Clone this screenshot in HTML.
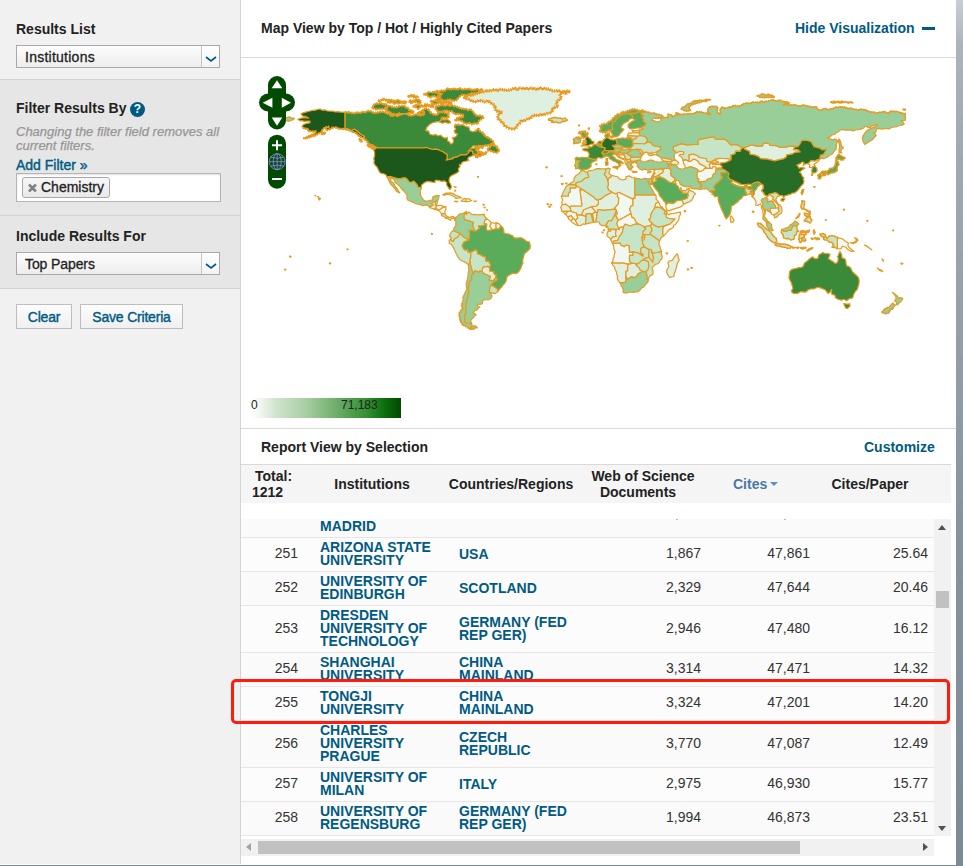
<!DOCTYPE html>
<html lang="en">
<head>
<meta charset="utf-8">
<title>Essential Science Indicators</title>
<style>
*{box-sizing:border-box;margin:0;padding:0}
html,body{width:963px;height:866px;overflow:hidden;background:#fff}
body{position:relative;font-family:"Liberation Sans",Arial,sans-serif;font-size:14px;color:#222}
.abs{position:absolute}
#side{left:0;top:0;width:240px;height:866px;background:#f1f1f1}
#vline{left:240px;top:0;width:1px;height:866px;background:#d4d4d4}
.sec{left:0;width:240px;background:#e6e6e6;border-top:1px solid #d2d2d2;border-bottom:1px solid #d2d2d2}
.h{font-weight:bold;font-size:14px;color:#222;white-space:nowrap;line-height:16px}
.sel{left:16px;width:204px;height:23px;border:1px solid #a9a9a9;background:linear-gradient(#fdfdfd,#ededed);font-size:14px;line-height:23px;padding-left:8px;color:#222;-webkit-text-stroke:0.3px #222}
.sel .arr{position:absolute;right:0;top:0;width:18px;height:21px;border-left:1px solid #c4c4c4;background:linear-gradient(#fff,#f3f3f3)}
.sel .arr svg{position:absolute;left:3px;top:10px}
.blue{color:#005a84}
.btn{top:304px;height:25px;border:1px solid #bdbdbd;background:linear-gradient(#fcfcfc,#f0f0f0);font-size:14px;line-height:25px;text-align:center;color:#005a84;letter-spacing:-0.2px;-webkit-text-stroke:0.4px #005a84}
#rstrip{left:956px;top:0;width:7px;height:866px;background:linear-gradient(#c9ced3 0%,#adb4bb 5%,#a3abb3 14%,#939ea7 40%,#8794a0 60%,#7a8b96 100%)}
#bstrip{left:0;top:865px;width:963px;height:1px;background:#7a8b96}
.hl{left:241px;height:1px;background:#d9d9d9}
.th{font-weight:bold;font-size:14px;line-height:16px;color:#222;text-align:center;white-space:nowrap}
.row{left:241px;width:692px;border-top:1px solid #e6e6e6}
.row.odd{background:#fafafa}
.row.even{background:#fcfcfc}
.n{position:absolute;left:0;width:57px;text-align:right;font-size:14px;color:#333;line-height:16px}
.inst,.ctry{position:absolute;font-weight:bold;font-size:14px;line-height:13px;color:#005a84;white-space:nowrap;letter-spacing:0}
.inst{left:79px}
.ctry{left:218px}
.num{position:absolute;text-align:right;font-size:14px;color:#333;line-height:16px;width:80px}
.c1{left:380px}.c2{left:489px}.c3{left:607px}
</style>
</head>
<body>
<!-- SIDEBAR -->
<div id="side" class="abs"></div>
<div id="vline" class="abs"></div>
<div class="abs h" style="left:16px;top:21px">Results List</div>
<div class="abs sel" style="top:45px;letter-spacing:0.25px">Institutions<span class="arr"><svg width="12" height="7" viewBox="0 0 12 7"><path d="M1 1 L6 5 L11 1" fill="none" stroke="#005a84" stroke-width="1.7"/></svg></span></div>

<div class="abs sec" style="top:79px;height:137px"></div>
<div class="abs h" style="left:16px;top:100px">Filter Results By</div>
<div class="abs" style="left:130px;top:102px;width:15px;height:15px;border-radius:50%;background:#005a84;color:#fff;font-weight:bold;font-size:12px;line-height:15px;text-align:center">?</div>
<div class="abs" style="left:16px;top:125px;font-style:italic;font-size:13px;line-height:14px;color:#969696;-webkit-text-stroke:0.25px #969696;white-space:nowrap">Changing the filter field removes all<br>current filters.</div>
<div class="abs blue" style="left:16px;top:157px;font-size:14px;line-height:16px;white-space:nowrap;-webkit-text-stroke:0.4px #005a84">Add Filter »</div>
<div class="abs" style="left:16px;top:173px;width:205px;height:29px;background:#fff;border:1px solid #b5b5b5;box-shadow:inset 0 1px 2px rgba(0,0,0,.12)"></div>
<div class="abs" style="left:22px;top:177px;width:88px;height:21px;border:1px solid #a8a8a8;border-radius:3px;background:linear-gradient(#f7f7f7,#e9e9e9);font-size:14px;line-height:19px;color:#222;white-space:nowrap"><span style="position:absolute;left:5px;top:0;color:#808080;font-weight:bold;font-size:15px;-webkit-text-stroke:0.8px #808080">×</span><span style="position:absolute;left:18px;top:0;-webkit-text-stroke:0.3px #222">Chemistry</span></div>

<div class="abs sec" style="top:215px;height:74px;border-top:1px solid #d2d2d2"></div>
<div class="abs h" style="left:16px;top:228px">Include Results For</div>
<div class="abs sel" style="top:252px;letter-spacing:-0.1px">Top Papers<span class="arr"><svg width="12" height="7" viewBox="0 0 12 7"><path d="M1 1 L6 5 L11 1" fill="none" stroke="#005a84" stroke-width="1.7"/></svg></span></div>

<div class="abs btn" style="left:16px;width:56px">Clear</div>
<div class="abs btn" style="left:80px;width:103px">Save Criteria</div>

<!-- MAIN HEADER -->
<div class="abs h" style="left:261px;top:20px;word-spacing:0px">Map View by Top / Hot / Highly Cited Papers</div>
<div class="abs h blue" style="left:795px;top:20px">Hide Visualization</div>
<div class="abs" style="left:922px;top:27px;width:13px;height:3px;background:#005a84"></div>
<div class="abs hl" style="top:57px;width:715px"></div>

<!-- MAP -->
<svg class="abs" id="map" style="left:241px;top:58px" width="715" height="370" viewBox="241 58 715 370">
<!--MAPSTART-->
<g stroke="#e89a1e" stroke-width="1.2" stroke-linejoin="round">
<path fill="#f1f8f1" d="M435.4,201.9 437.5,200.8 437.1,203.6 435.9,205.3 435.4,205.3Z"/>
<path fill="#f1f8f1" d="M435.2,207.9 436.9,205.7 438.9,205.5 440.9,205.3 443.3,206.4 445.8,206.9 443.0,207.2 440.9,209.0 438.3,210.4 437.8,209.7Z"/>
<path fill="#f1f8f1" d="M433.8,209.0 435.2,207.9 437.8,209.7 437.8,210.0 435.8,209.6Z"/>
<path fill="#f1f8f1" d="M438.3,210.4 440.9,209.0 443.0,207.2 445.8,206.9 445.9,209.2 445.0,211.2 445.0,213.8 441.5,213.7 440.1,211.9Z"/>
<path fill="#f1f8f1" d="M461.2,201.2 464.0,198.4 465.9,198.8 465.9,201.7 464.5,201.4Z"/>
<path fill="#f1f8f1" d="M465.9,198.8 468.9,198.8 471.7,200.7 468.9,201.4 465.9,201.7Z"/>
<path fill="#f1f8f1" d="M454.4,201.2 457.9,201.5 456.7,202.0Z"/>
<path fill="#f1f8f1" d="M454.0,186.6 456.3,187.0 455.3,187.5ZM454.9,189.9 455.8,190.9 454.9,191.3Z"/>
<path fill="#f1f8f1" d="M483.2,214.4 484.6,214.4 484.2,215.4Z"/>
<path fill="#f1f8f1" d="M486.3,218.2 489.0,220.4 491.2,222.5 491.1,223.7 489.8,226.0 491.6,228.6 492.5,229.6 489.0,230.6 486.7,230.5 486.3,227.7 486.7,224.2 485.1,223.9 484.1,223.4 484.6,220.8Z"/>
<path fill="#f1f8f1" d="M491.2,222.5 494.0,223.1 496.8,222.8 495.9,225.1 496.3,228.7 493.3,229.6 492.5,229.6 491.6,228.6 489.8,226.0 491.1,223.7Z"/>
<path fill="#f1f8f1" d="M496.8,222.8 498.8,223.6 500.3,225.1 500.8,225.8 499.1,228.9 496.3,228.7 495.9,225.1Z"/>
<path fill="#f1f8f1" d="M431.3,233.4 432.6,233.8 431.9,234.6Z"/>
<path fill="#f1f8f1" d="M619.0,154.5 624.3,154.9 625.1,156.6 624.6,157.5 623.4,159.1 621.7,158.4 619.0,156.6Z"/>
<path fill="#f1f8f1" d="M623.4,159.1 624.6,157.5 626.2,159.1 625.0,160.3Z"/>
<path fill="#f1f8f1" d="M625.0,160.3 626.2,159.1 626.9,161.0 627.8,162.2 626.0,164.1 625.0,162.7Z"/>
<path fill="#f1f8f1" d="M626.9,161.0 626.9,159.2 628.6,159.7 630.2,159.6 631.3,161.3 627.8,162.2Z"/>
<path fill="#f1f8f1" d="M637.5,149.3 640.3,149.3 643.5,152.3 640.3,154.0 640.3,152.1Z"/>
<path fill="#f1f8f1" d="M682.8,160.4 685.4,159.6 688.9,161.3 690.6,161.3 693.2,159.1 695.9,159.7 698.5,161.5 699.4,163.6 704.6,166.2 707.2,168.1 704.6,168.4 703.7,170.0 700.2,171.7 698.0,171.2 697.6,169.5 694.1,167.9 690.6,166.7 686.8,167.9 685.2,168.2 685.0,165.3 683.6,163.6 683.3,161.5Z"/>
<path fill="#f1f8f1" d="M714.2,160.1 715.1,159.2 719.4,158.4 722.9,158.5 729.0,158.7 731.1,159.7 727.3,161.8 724.7,162.7 720.3,163.2 719.8,164.4 715.9,164.4 712.4,164.3 712.1,163.0 715.1,163.2 718.6,162.3 716.3,161.0 714.2,161.0 715.1,159.6Z"/>
<path fill="#f1f8f1" d="M709.5,168.4 709.8,166.2 709.0,164.8 710.9,163.2 712.1,162.2 712.1,163.0 712.4,164.3 715.9,164.4 719.8,164.4 722.0,166.2 721.7,168.2 718.6,168.1 715.9,169.1 715.9,167.0 713.3,166.5 712.1,168.4Z"/>
<path fill="#f1f8f1" d="M665.8,204.5 666.5,204.3 667.9,202.7 673.2,203.4 676.7,200.7 681.9,200.0 683.8,204.1 681.9,205.9 679.5,207.4 676.7,208.1 674.3,208.9 671.9,209.6 669.7,210.7 667.1,210.9 666.2,207.8Z"/>
<path fill="#f1f8f1" d="M698.0,171.2 700.2,171.7 703.7,170.0 704.6,168.4 707.2,168.1 709.5,168.4 712.1,168.4 713.3,166.5 715.9,167.0 715.9,169.1 718.6,168.1 721.7,168.2 721.2,168.8 715.9,170.1 715.4,173.1 713.3,174.3 712.4,177.4 712.1,177.8 707.2,179.3 706.7,181.2 700.2,181.9 697.4,181.2 699.0,179.2 697.3,178.3 696.7,174.0Z"/>
<path fill="#f1f8f1" d="M746.3,185.6 747.9,184.0 751.0,184.5 751.9,186.3 747.9,186.6Z"/>
<path fill="#f1f8f1" d="M752.3,197.0 752.8,196.0 754.0,194.4 754.2,191.3 756.3,189.2 757.3,186.8 759.1,185.6 761.0,183.8 763.1,185.1 763.4,188.2 761.5,190.8 763.8,192.7 764.3,194.6 766.0,195.6 767.8,196.1 765.9,197.7 762.6,198.8 761.3,200.8 763.4,204.6 762.6,206.7 764.1,209.5 765.0,212.4 763.4,215.6 762.9,212.1 762.6,210.0 761.5,208.2 761.5,206.0 760.5,203.8 757.8,205.5 755.7,205.2 756.1,201.7 754.4,198.6Z"/>
<path fill="#f1f8f1" d="M765.9,197.7 767.8,196.1 769.2,194.1 770.9,195.6 773.7,197.2 772.5,199.1 774.8,200.8 777.4,203.8 778.8,206.6 778.8,207.8 776.2,208.1 775.3,207.9 775.5,205.7 774.1,204.3 772.7,201.2 769.4,201.4 767.4,202.2 767.8,199.1Z"/>
<path fill="#f1f8f1" d="M769.9,209.5 770.9,208.1 775.3,207.9 776.2,208.1 778.8,207.8 778.8,211.6 776.2,213.8 773.6,214.9 771.8,214.5 770.8,212.6Z"/>
<path fill="#f1f8f1" d="M837.3,237.4 839.3,238.1 841.5,238.4 843.4,239.5 845.7,241.6 848.6,243.3 847.8,244.7 848.6,246.9 850.4,248.5 852.0,250.0 853.9,251.1 851.6,251.5 849.5,250.6 847.5,249.3 846.0,247.3 842.5,246.2 840.8,248.8 837.3,248.7ZM850.4,242.6 853.9,242.4 856.8,240.2 856.5,242.1 853.9,243.6ZM854.4,237.6 857.4,239.0 857.9,240.7 856.1,239.2Z"/>
<path fill="#f1f8f1" d="M808.1,163.7 811.1,160.4 814.9,161.0 817.6,159.4 819.3,159.6 817.6,161.8 815.7,163.3 813.7,164.4 815.1,166.0 812.3,167.4 809.4,167.5 809.9,164.8Z"/>
<path fill="#f1f8f1" d="M617.3,193.0 619.0,192.2 633.0,199.1 633.0,205.7 631.3,205.7 629.5,209.5 630.4,210.9 631.3,214.7 629.5,214.2 624.3,217.3 619.9,219.6 618.2,219.9 615.5,215.6 617.3,213.8 616.4,210.4 614.7,207.8 618.2,203.8 618.7,198.2 617.3,196.5Z"/>
<path fill="#e0f0e0" d="M598.4,199.6 601.6,198.6 605.1,195.6 612.1,192.2 615.5,193.7 617.3,193.0 617.3,196.5 618.7,198.2 618.2,203.8 614.7,207.8 614.7,209.2 608.6,209.8 603.3,210.4 598.1,209.5 597.4,212.6 595.3,212.1 594.8,210.9 591.4,206.9 596.3,206.0 598.4,203.8Z"/>
<path fill="#e0f0e0" d="M582.7,189.6 593.2,196.8 596.7,200.0 598.4,199.6 598.4,203.8 596.3,206.0 591.4,206.9 587.6,208.3 583.6,210.0 581.5,214.9 577.1,215.2 576.3,213.0 572.4,212.1 571.2,211.4 569.8,207.4 571.0,205.9 581.5,206.0 581.8,204.6 579.8,189.6Z"/>
<path fill="#f1f8f1" d="M561.4,196.0 568.4,196.0 568.4,193.0 570.1,192.2 570.1,187.8 575.9,187.8 575.9,185.6 582.7,189.6 579.8,189.6 581.8,204.6 581.5,206.0 571.0,205.9 569.8,207.4 565.8,204.1 562.3,205.0 561.8,202.4 562.6,200.0 561.9,198.0Z"/>
<path fill="#f1f8f1" d="M561.9,211.4 567.2,211.2 567.2,212.8 564.9,213.8Z"/>
<path fill="#f1f8f1" d="M564.9,213.8 567.2,212.8 567.2,211.2 571.2,211.4 572.4,212.1 576.3,213.0 577.1,215.2 577.7,218.3 575.4,220.2 573.1,218.3 571.0,215.6 567.9,217.1 566.6,215.3Z"/>
<path fill="#f1f8f1" d="M567.9,217.1 571.0,215.6 573.1,218.3 571.0,220.9 569.1,219.4Z"/>
<path fill="#f1f8f1" d="M571.0,220.9 573.1,218.3 575.4,220.2 578.0,225.3 575.9,224.8 574.2,223.7 572.4,222.6Z"/>
<path fill="#f1f8f1" d="M618.2,219.9 619.9,219.6 624.3,217.3 629.5,214.2 631.3,214.7 632.1,217.3 633.9,217.8 636.5,222.5 639.1,224.2 634.8,224.2 630.4,226.0 625.1,224.2 623.6,226.8 619.9,227.7 619.0,229.4 616.6,223.4Z"/>
<path fill="#f1f8f1" d="M608.2,228.9 610.8,229.1 610.8,231.2 608.2,231.2Z"/>
<path fill="#f1f8f1" d="M641.7,237.8 644.9,237.1 644.2,239.8 642.4,240.5Z"/>
<path fill="#f1f8f1" d="M654.5,208.1 654.8,206.9 655.7,203.4 658.5,201.7 659.6,203.7 660.1,206.0 662.3,207.1 663.6,209.2 666.4,210.9 665.1,211.2 660.9,207.8 657.3,207.1Z"/>
<path fill="#f1f8f1" d="M665.1,211.2 666.4,210.9 666.7,213.0 666.2,214.0 664.1,213.8Z"/>
<path fill="#f1f8f1" d="M666.7,213.0 668.8,214.9 670.8,213.6 673.2,213.5 675.6,213.2 678.0,212.5 680.5,212.1 680.3,214.7 679.2,216.5 679.0,218.8 678.2,220.9 676.7,222.5 675.7,224.3 673.7,225.3 673.2,227.5 671.4,228.6 668.9,229.9 667.1,232.0 665.5,234.0 663.7,235.8 662.7,234.5 662.7,228.0 664.3,226.1 666.2,225.1 669.7,224.2 674.9,219.0 669.7,218.7 666.2,217.3 666.2,214.7 666.2,214.0Z"/>
<path fill="#f1f8f1" d="M612.4,243.1 613.8,243.1 620.1,243.1 620.8,245.0 624.3,246.6 626.0,245.0 629.2,245.6 629.5,252.3 633.0,251.8 633.0,255.4 629.5,255.4 629.5,261.0 632.0,263.4 627.8,264.1 623.4,263.1 615.5,263.1 611.7,262.9 613.0,261.1 612.9,258.9 614.2,256.8 614.3,254.2 615.2,252.0 613.8,248.5 613.6,245.9 612.6,243.5Z"/>
<path fill="#f1f8f1" d="M638.2,284.2 640.9,282.7 642.4,284.0 640.5,285.9Z"/>
<path fill="#f1f8f1" d="M645.2,278.0 647.1,279.4 646.8,280.2 645.2,279.7Z"/>
<path fill="#f1f8f1" d="M877.4,267.9 879.4,269.4 881.8,270.2 882.7,271.6 879.2,270.2Z"/>
<path fill="#f1f8f1" d="M900.7,263.2 902.9,263.4 901.9,264.4Z"/>
<path fill="#f1f8f1" d="M864.3,245.0 867.0,246.4 870.5,249.0 871.9,249.9 868.7,247.6 866.8,245.9Z"/>
<path fill="#f1f8f1" d="M882.0,258.9 883.0,259.8 883.6,261.5 882.7,260.3Z"/>
<path fill="#f1f8f1" d="M289.4,256.1 291.1,256.3 290.5,257.3 289.7,257.0Z"/>
<path fill="#f1f8f1" d="M329.3,262.9 330.9,263.1 330.3,264.0 329.6,263.7Z"/>
<path fill="#f1f8f1" d="M548.7,206.2 550.4,206.4 549.8,207.3 549.0,207.1Z"/>
<path fill="#f1f8f1" d="M547.0,203.7 548.6,203.8 548.0,204.7 547.3,204.4Z"/>
<path fill="#f1f8f1" d="M550.4,204.4 551.8,204.5 551.3,205.3 550.7,205.1Z"/>
<path fill="#f1f8f1" d="M561.4,183.5 563.2,183.7 562.6,184.6 561.8,184.4Z"/>
<path fill="#f1f8f1" d="M565.5,183.0 567.1,183.2 566.5,184.0 565.8,183.8Z"/>
<path fill="#f1f8f1" d="M690.9,267.4 692.5,267.6 691.9,268.5 691.2,268.2Z"/>
<path fill="#f1f8f1" d="M687.2,269.0 688.8,269.2 688.2,270.0 687.5,269.8Z"/>
<path fill="#f1f8f1" d="M666.1,252.9 667.7,253.0 667.1,253.9 666.4,253.7Z"/>
<path fill="#f1f8f1" d="M687.1,240.6 688.5,240.8 688.0,241.5 687.4,241.3Z"/>
<path fill="#f1f8f1" d="M601.9,232.0 603.3,232.1 602.8,232.9 602.2,232.7Z"/>
<path fill="#f1f8f1" d="M603.4,229.8 604.6,229.9 604.2,230.6 603.7,230.4Z"/>
<path fill="#f1f8f1" d="M605.6,226.4 607.0,226.6 606.5,227.3 605.9,227.1Z"/>
<path fill="#f1f8f1" d="M843.2,209.3 844.6,209.4 844.1,210.2 843.5,209.9Z"/>
<path fill="#f1f8f1" d="M825.3,219.7 826.5,219.8 826.1,220.5 825.6,220.3Z"/>
<path fill="#f1f8f1" d="M866.7,220.6 867.9,220.7 867.5,221.4 867.0,221.2Z"/>
<path fill="#f1f8f1" d="M284.5,269.2 285.9,269.4 285.4,270.1 284.8,269.9Z"/>
<path fill="#f1f8f1" d="M892.5,230.1 893.8,230.2 893.3,230.9 892.8,230.7Z"/>
<path fill="#f1f8f1" d="M346.9,249.0 348.1,249.1 347.7,249.8 347.2,249.6Z"/>
<path fill="#f1f8f1" d="M545.8,166.9 547.4,167.1 546.8,167.9 546.1,167.7Z"/>
<path fill="#f1f8f1" d="M560.9,175.8 562.3,175.9 561.8,176.7 561.2,176.5Z"/>
<path fill="#f1f8f1" d="M684.2,210.7 685.9,210.9 685.3,211.8 684.5,211.6Z"/>
<path fill="#f1f8f1" d="M718.8,225.3 720.0,225.4 719.6,226.0 719.1,225.9Z"/>
<path fill="#f1f8f1" d="M752.3,211.2 754.0,211.4 753.4,212.4 752.6,212.1Z"/>
<path fill="#f1f8f1" d="M477.4,176.6 478.5,176.7 478.1,177.3 477.6,177.1Z"/>
<path fill="#f1f8f1" d="M483.0,204.4 484.4,204.5 483.9,205.3 483.3,205.1Z"/>
<path fill="#f1f8f1" d="M484.0,207.2 485.2,207.3 484.8,208.0 484.2,207.8Z"/>
<path fill="#f1f8f1" d="M486.7,209.7 487.7,209.8 487.4,210.4 486.9,210.2Z"/>
<path fill="#e0f0e0" d="M629.5,209.5 629.5,209.5 631.3,205.7 631.3,205.7 631.3,205.7 632.9,205.7 632.9,205.7 632.9,205.7 632.9,205.7 633.0,205.7 633.0,205.7 633.0,205.7 633.0,205.7 633.0,205.7 633.0,205.7 633.0,205.6 633.0,205.6 633.0,205.6 633.0,205.6 633.0,205.6 633.0,205.6 633.0,205.6 633.0,198.2 633.0,198.2 633.0,198.2 634.7,198.2 634.7,198.2 634.7,198.2 634.7,198.2 634.7,198.2 634.7,198.2 634.7,198.2 634.7,198.2 634.7,198.2 634.7,198.2 634.7,198.2 634.7,198.2 634.7,198.2 634.7,198.2 634.7,198.2 634.7,198.2 634.8,198.1 634.8,194.8 634.8,194.8 634.8,194.8 655.5,194.8 655.5,194.8 655.5,194.8 656.2,196.5 656.2,196.5 656.2,196.5 656.1,199.1 656.1,199.1 656.1,199.1 656.1,199.1 656.1,199.1 656.1,199.1 656.1,199.1 656.1,199.1 656.1,199.1 658.5,201.7 658.5,201.7 658.5,201.7 655.7,203.4 655.7,203.4 655.7,203.4 655.7,203.4 655.7,203.4 655.7,203.4 655.7,203.4 655.7,203.5 655.7,203.5 654.8,206.9 654.8,206.9 654.5,208.1 654.5,208.1 654.5,208.1 654.5,208.1 654.5,209.5 654.5,209.5 654.5,209.5 652.7,211.2 652.7,211.2 652.7,211.2 652.7,211.2 651.0,214.2 651.0,214.2 651.0,214.2 651.0,214.2 651.0,214.2 650.5,218.2 650.5,218.2 650.5,218.2 648.8,219.3 648.8,219.3 648.8,219.3 648.8,219.3 648.8,219.3 648.8,219.4 648.8,219.4 648.8,219.4 648.8,219.4 648.8,219.4 648.8,219.4 648.8,219.4 648.8,219.4 648.8,219.4 648.8,219.4 648.8,219.4 648.8,219.4 648.8,219.5 652.2,223.5 652.2,223.5 652.2,223.5 650.5,225.6 650.5,225.6 650.5,225.6 645.2,226.5 645.2,226.5 645.2,226.5 643.5,226.3 643.5,226.3 643.5,226.3 639.1,224.2 639.1,224.2 636.5,222.5 636.5,222.5 636.5,222.5 633.9,217.8 633.9,217.8 633.9,217.8 633.9,217.8 633.9,217.8 633.9,217.8 633.9,217.8 633.9,217.8 633.8,217.8 632.1,217.3 632.1,217.3 632.1,217.3 631.3,214.7 631.3,214.7 630.4,210.9 630.4,210.9 630.4,210.9 630.4,210.9 629.5,209.5Z"/>
<path fill="#e0f0e0" d="M463.6,97.3 465.9,97.1 467.5,94.9 470.0,95.7 472.1,95.2 474.1,94.2 476.3,93.8 478.4,92.9 480.5,92.1 482.8,92.1 486.3,90.8 488.5,90.8 490.7,90.9 492.8,89.7 495.0,89.6 497.3,91.0 499.4,89.3 501.6,89.5 503.8,89.9 506.0,90.4 508.2,90.3 510.4,90.0 512.5,89.0 514.6,87.8 517.0,90.1 519.0,87.8 521.3,88.5 523.3,88.6 525.3,88.2 527.4,89.1 529.4,88.2 531.5,88.5 533.5,88.0 535.4,89.4 537.4,89.5 539.5,87.6 541.4,89.1 543.5,88.1 545.5,88.9 547.5,89.0 549.7,89.3 551.6,90.9 553.9,91.0 556.2,90.8 558.2,90.3 560.1,92.1 562.1,91.7 564.1,91.9 566.2,90.9 568.2,91.3 570.1,91.8 567.8,91.3 566.2,93.9 563.6,92.3 561.6,92.9 559.7,94.2 560.7,96.3 561.4,98.6 559.1,99.3 557.5,101.0 556.2,102.9 557.9,106.4 555.3,107.2 552.7,108.1 552.7,110.7 550.9,112.9 548.0,112.9 545.7,114.2 543.6,114.6 541.5,114.3 539.5,115.5 537.4,115.4 535.2,115.0 533.0,115.5 531.6,117.1 530.0,118.5 527.8,118.7 525.8,120.2 523.7,121.1 521.3,120.2 520.2,122.9 517.8,124.6 516.8,126.9 515.1,128.9 512.5,128.9 509.7,128.6 507.3,127.2 504.9,126.5 504.1,123.9 502.1,122.8 501.1,120.7 498.6,119.8 497.7,117.6 498.6,114.2 502.1,112.4 500.1,111.5 497.9,111.6 495.9,110.7 495.1,107.2 494.0,104.8 491.6,103.7 489.8,102.0 487.8,100.6 485.3,102.3 483.3,101.2 481.1,100.8 478.7,100.4 476.3,101.9 473.9,101.4 471.5,101.2 469.7,99.3 467.1,99.1Z"/>
<path fill="#e0f0e0" d="M430.1,207.8 430.1,206.6 433.1,205.0 431.5,203.1 432.2,202.0 435.4,201.9 435.4,205.3 436.9,205.7 435.2,207.9 433.8,209.0Z"/>
<path fill="#e0f0e0" d="M473.8,201.0 476.4,201.2 475.0,201.7Z"/>
<path fill="#e0f0e0" d="M481.8,271.4 482.5,268.4 483.4,266.9 487.9,266.4 489.5,267.7 490.0,271.2 493.8,271.6 494.4,274.5 496.3,274.7 495.8,277.3 493.7,280.4 492.5,280.6 489.0,280.1 490.4,276.6 486.3,274.5 484.6,274.2Z"/>
<path fill="#e0f0e0" d="M627.8,134.4 628.6,133.2 631.1,133.2 633.5,132.5 639.1,132.7 640.3,135.5 637.4,136.3 627.8,135.7Z"/>
<path fill="#e0f0e0" d="M660.9,157.5 667.1,158.7 669.7,158.9 672.3,160.4 672.1,161.5 669.7,161.5 667.1,161.7 663.6,161.0 661.9,159.5Z"/>
<path fill="#e0f0e0" d="M667.1,161.7 669.7,161.5 672.3,164.4 671.8,165.5 669.3,164.1 667.4,163.4Z"/>
<path fill="#e0f0e0" d="M669.7,161.5 672.1,161.5 672.3,160.4 675.8,160.3 677.5,161.5 678.9,163.0 677.0,164.9 676.5,166.3 674.9,164.4 671.8,165.5 672.3,164.4Z"/>
<path fill="#e0f0e0" d="M688.9,161.3 688.9,154.9 693.2,154.0 697.6,155.8 699.4,157.5 706.3,158.5 707.2,161.5 709.8,161.8 711.6,161.3 714.2,160.1 715.1,159.6 714.2,161.0 716.3,161.0 718.6,162.3 715.1,163.2 712.1,162.2 710.9,163.2 709.0,164.8 709.8,166.2 709.5,168.4 707.2,168.1 704.6,166.2 699.4,163.6 698.5,161.5 695.9,159.7 693.2,159.1 690.6,161.3Z"/>
<path fill="#e0f0e0" d="M654.3,170.7 655.2,169.1 657.4,169.1 660.9,169.1 665.1,168.4 663.2,169.6 663.0,172.6 658.8,175.0 655.4,176.9 653.6,176.0 653.6,175.0 654.8,173.1 653.8,171.9Z"/>
<path fill="#e0f0e0" d="M665.1,168.4 669.3,168.4 671.4,170.8 670.5,173.1 671.4,175.7 674.6,178.3 674.9,180.9 674.4,180.9 672.3,182.5 669.1,182.3 664.4,178.8 661.8,177.6 659.5,176.9 658.8,175.0 663.0,172.6 663.2,169.6Z"/>
<path fill="#e0f0e0" d="M681.9,200.0 687.1,198.2 688.2,194.8 687.5,193.5 688.9,190.4 689.9,190.4 693.6,192.0 695.5,193.9 693.9,195.4 693.2,197.5 691.8,200.0 689.7,201.7 687.1,202.6 683.8,204.1Z"/>
<path fill="#e0f0e0" d="M731.0,183.0 732.9,180.4 738.6,183.1 741.3,184.4 744.9,184.5 744.9,187.1 739.5,186.6 736.0,185.4Z"/>
<path fill="#e0f0e0" d="M730.4,216.3 731.1,215.9 733.0,218.2 734.1,220.8 732.5,222.2 730.8,222.5 730.3,219.0Z"/>
<path fill="#e0f0e0" d="M744.4,147.6 748.2,146.2 751.7,144.8 757.0,146.2 762.2,146.2 764.0,142.8 769.2,143.6 770.1,145.4 776.2,145.7 779.7,147.1 784.9,147.4 790.1,145.9 794.9,146.6 793.6,149.7 798.0,149.7 800.3,151.9 795.4,152.3 791.9,154.2 786.7,154.9 786.3,157.1 783.2,158.9 774.4,160.8 767.4,159.1 760.5,158.7 758.7,156.6 754.4,154.9 750.0,154.5 749.6,151.4 744.7,149.2Z"/>
<path fill="#e0f0e0" d="M611.2,175.3 613.8,175.9 615.8,176.3 617.8,176.9 619.0,178.6 622.5,180.0 626.0,179.2 626.0,176.6 629.5,175.9 632.0,177.5 634.9,178.1 634.8,181.8 634.8,194.8 634.8,198.2 633.0,198.2 633.0,199.1 619.0,192.2 617.3,193.0 615.5,193.7 612.1,192.2 608.6,189.9 607.5,187.5 608.4,184.4 607.7,180.5 609.1,177.8 611.2,176.7Z"/>
<path fill="#e0f0e0" d="M562.3,205.0 565.8,204.1 569.8,207.4 571.2,211.4 567.2,211.2 561.9,211.4 561.5,209.3 560.5,207.4Z"/>
<path fill="#e0f0e0" d="M578.0,225.3 575.4,220.2 577.7,218.3 577.1,215.2 581.5,214.9 586.2,216.4 585.5,224.1 583.0,224.1 580.6,225.6Z"/>
<path fill="#e0f0e0" d="M581.5,214.9 583.6,210.0 587.6,208.3 591.4,206.9 594.8,210.9 595.3,212.1 592.7,213.8 591.1,213.7 586.2,213.8 586.2,216.4Z"/>
<path fill="#e0f0e0" d="M593.2,222.3 592.0,218.2 591.1,213.7 592.7,213.8 593.9,222.2Z"/>
<path fill="#e0f0e0" d="M593.9,222.2 592.7,213.8 595.3,212.1 597.4,212.6 595.8,221.8Z"/>
<path fill="#e0f0e0" d="M608.2,231.2 610.8,231.2 610.8,229.1 614.3,229.1 616.2,230.6 615.5,233.8 616.4,236.4 612.9,236.9 610.7,239.7 609.6,237.7 607.5,236.5 606.8,234.3Z"/>
<path fill="#e0f0e0" d="M610.7,239.7 612.9,236.9 616.4,236.4 615.5,233.8 616.2,230.6 614.3,229.1 619.0,229.4 619.9,227.7 623.6,226.8 622.2,232.9 619.0,237.2 617.8,240.4 613.8,241.0 612.4,243.0Z"/>
<path fill="#c6e4c6" d="M612.4,243.0 613.8,241.0 617.8,240.4 619.0,237.2 622.2,232.9 623.6,226.8 625.1,224.2 630.4,226.0 634.8,224.2 639.1,224.2 643.5,226.3 645.7,229.1 643.0,231.5 642.8,235.3 641.7,237.8 642.4,240.5 642.6,243.3 644.7,247.1 641.6,247.6 640.7,249.0 641.0,253.4 643.1,254.0 643.1,256.1 640.0,254.4 638.6,253.0 635.3,252.3 633.0,251.8 629.5,252.3 629.2,245.6 626.0,245.0 624.3,246.6 620.8,245.0 620.1,243.1 613.8,243.1Z"/>
<path fill="#e0f0e0" d="M641.7,237.8 642.8,235.3 644.4,234.6 644.9,237.1Z"/>
<path fill="#c6e4c6" d="M629.5,255.4 633.0,255.4 633.0,251.8 635.3,252.3 638.6,253.0 640.0,254.4 643.1,256.1 643.1,254.0 641.0,253.4 640.7,249.0 641.6,247.6 644.7,247.1 648.7,249.2 649.1,251.6 648.7,257.2 644.0,258.9 644.2,259.9 641.6,260.6 638.2,263.9 635.3,263.8 632.0,263.4 629.5,261.0Z"/>
<path fill="#c6e4c6" d="M648.7,249.2 651.3,249.5 651.5,252.8 652.2,253.0 653.6,258.0 652.7,262.4 651.0,259.8 648.7,257.2 649.1,251.6Z"/>
<path fill="#c6e4c6" d="M661.6,251.1 661.2,253.7 662.2,256.3 662.0,258.9 660.2,260.3 659.2,262.4 657.6,263.8 655.5,264.1 653.8,266.0 651.9,267.6 653.1,271.0 652.9,274.5 650.3,275.6 648.5,277.8 648.5,279.4 647.1,279.4 646.8,275.0 645.7,271.7 647.8,269.8 648.7,266.7 648.4,261.8 644.2,259.9 644.0,258.9 648.7,257.2 651.0,259.8 652.7,262.4 653.6,258.0 652.2,253.0 657.4,252.5Z"/>
<path fill="#e0f0e0" d="M611.7,262.9 615.5,263.1 623.4,263.1 627.8,264.1 632.0,263.4 627.8,264.6 627.8,271.0 626.0,271.0 626.0,275.9 626.0,282.1 621.7,282.8 619.9,282.5 618.3,280.9 617.3,278.8 617.7,276.4 616.7,274.2 616.4,271.9 615.1,269.8 614.6,267.2 612.9,265.3Z"/>
<path fill="#e0f0e0" d="M677.2,253.7 678.0,255.7 678.2,257.9 679.3,259.8 677.5,263.2 676.8,265.3 676.5,267.6 675.6,269.6 675.2,271.8 674.1,273.8 674.0,276.1 673.2,276.6 669.7,277.3 668.2,275.6 667.1,273.6 666.5,271.0 667.5,268.8 668.8,266.7 668.4,264.7 667.9,262.7 669.3,261.0 672.3,260.3 673.5,258.2 674.9,256.3Z"/>
<path fill="#c6e4c6" d="M441.5,213.7 445.0,213.8 446.9,216.3 446.2,218.5 443.6,216.4 441.5,215.6Z"/>
<path fill="#c6e4c6" d="M446.2,218.5 446.9,216.3 449.7,217.6 452.3,216.3 456.0,217.8 455.1,220.4 454.0,218.2 451.4,218.7 450.5,220.2 447.9,218.7Z"/>
<path fill="#c6e4c6" d="M442.7,194.9 446.2,193.0 448.4,193.1 450.5,192.9 453.4,193.7 455.8,195.3 458.0,196.0 460.2,197.0 461.5,197.9 458.6,197.9 455.8,198.4 454.9,197.0 451.4,195.3 447.9,194.1 444.4,195.1Z"/>
<path fill="#c6e4c6" d="M463.6,216.8 464.5,213.8 466.6,212.4 466.1,214.7 468.9,211.9 471.8,214.4 473.8,214.6 475.9,214.5 479.4,214.9 482.8,214.4 484.6,216.3 486.3,218.2 484.6,220.8 484.1,223.4 485.1,223.9 484.6,225.1 481.1,226.0 478.5,225.8 479.4,228.6 475.9,231.2 474.1,230.8 474.1,229.4 472.7,226.0 473.2,222.2 468.9,220.8 464.9,219.9Z"/>
<path fill="#c6e4c6" d="M453.5,230.5 456.7,232.2 459.3,232.9 459.6,234.6 457.5,237.2 454.4,239.0 453.2,241.6 450.9,240.5 450.9,238.8 451.4,237.2 449.7,236.7 450.0,234.6 451.4,232.0Z"/>
<path fill="#c6e4c6" d="M449.2,240.4 450.9,238.8 450.9,240.5 453.2,241.6 454.4,239.0 457.5,237.2 459.6,234.6 459.3,232.9 463.6,236.9 468.0,239.5 468.9,240.2 464.0,241.9 462.1,245.6 463.6,248.8 465.0,250.2 468.0,249.4 467.8,252.0 469.8,252.0 471.1,254.6 470.6,258.0 469.8,260.6 470.6,262.4 469.8,263.2 468.2,264.6 466.3,262.9 462.8,261.2 459.8,259.4 457.9,256.8 456.3,253.7 454.6,250.2 453.2,247.1 451.6,244.7 449.3,243.3Z"/>
<path fill="#c6e4c6" d="M469.8,252.0 471.1,254.6 470.6,258.0 469.8,260.6 470.6,262.4 469.8,263.2 471.0,266.4 471.5,268.4 472.7,272.4 474.1,272.4 475.3,270.7 478.8,272.4 479.7,271.0 481.8,271.4 482.5,268.4 483.4,266.9 487.9,266.4 489.5,267.7 490.7,264.4 489.3,262.9 489.1,261.2 486.0,261.2 485.5,256.8 482.8,256.3 480.2,254.6 477.6,253.7 477.1,250.2 476.7,249.9 474.8,250.1 471.5,252.0Z"/>
<path fill="#c6e4c6" d="M490.5,285.3 493.7,286.3 497.7,289.2 497.9,291.5 495.2,293.6 492.1,293.2 489.1,291.8 489.5,289.2Z"/>
<path fill="#c6e4c6" d="M548.3,119.4 550.5,118.5 552.7,117.8 555.0,117.3 557.3,118.1 559.7,118.1 562.3,118.8 564.9,118.0 567.4,120.2 564.9,121.4 562.7,121.2 560.8,122.5 558.8,123.0 556.7,122.0 554.4,122.3 551.5,122.3 552.7,120.6 549.2,120.4Z"/>
<path fill="#99ce99" d="M580.3,139.1 581.5,138.4 579.8,137.2 578.4,137.2 577.1,138.3 578.0,138.9Z"/>
<path fill="#c6e4c6" d="M620.8,148.7 623.9,147.1 630.6,147.8 629.9,149.0 623.9,150.0 620.8,149.7Z"/>
<path fill="#c6e4c6" d="M630.9,156.8 635.6,157.1 641.0,157.1 640.0,160.1 637.0,160.6 634.8,161.3 631.3,161.3 630.2,159.6Z"/>
<path fill="#c6e4c6" d="M615.0,153.9 618.2,154.0 619.9,152.3 623.9,153.3 624.3,154.9 619.0,154.5 619.0,156.6 621.7,158.4 623.4,159.2 621.3,158.1 619.0,157.5 617.3,155.8 616.1,154.5Z"/>
<path fill="#c6e4c6" d="M623.9,153.3 626.5,153.0 628.6,155.2 630.4,155.4 630.9,156.8 630.2,159.6 628.6,159.7 626.9,159.2 626.2,159.1 624.6,157.5 625.1,156.6 624.3,154.9Z"/>
<path fill="#c6e4c6" d="M632.1,130.3 634.8,130.7 637.4,130.3 640.0,129.8 639.1,132.7 633.5,132.5Z"/>
<path fill="#c6e4c6" d="M627.8,135.7 637.4,136.3 635.6,138.9 632.1,139.5 630.9,138.6 628.1,137.0Z"/>
<path fill="#c6e4c6" d="M632.1,139.5 635.6,138.9 637.4,136.3 640.3,135.5 645.1,136.5 647.8,140.2 646.1,142.6 644.4,144.0 639.1,143.5 632.3,143.6 632.8,141.5Z"/>
<path fill="#c6e4c6" d="M630.6,147.8 633.0,145.4 632.3,143.6 639.1,143.5 644.4,144.0 646.1,142.6 650.5,142.2 653.1,145.5 657.4,146.4 660.9,146.9 660.4,150.0 657.8,151.3 655.1,152.5 652.2,152.8 649.6,153.2 652.2,154.0 654.8,154.4 652.7,155.1 649.9,155.9 647.8,154.2 649.6,153.2 646.1,152.1 643.8,153.5 643.0,154.5 640.3,154.0 643.5,152.3 640.3,149.3 637.5,149.3 631.1,149.9 629.9,149.0Z"/>
<path fill="#c6e4c6" d="M647.5,172.2 651.3,171.2 650.5,172.4 647.8,172.9Z"/>
<path fill="#c6e4c6" d="M676.7,152.8 675.8,151.9 673.2,149.7 673.2,146.6 676.1,145.7 681.0,143.6 687.1,144.8 693.2,144.5 698.5,144.5 697.6,141.9 698.5,139.6 704.6,138.4 710.7,137.2 714.7,137.0 715.1,138.9 719.4,139.3 723.8,138.9 726.9,140.5 730.8,144.8 736.9,144.5 739.5,146.2 743.5,147.6 740.9,149.0 740.4,151.3 736.0,151.1 734.8,154.0 731.1,154.9 731.1,159.7 729.0,158.7 722.9,158.5 719.4,158.4 715.1,159.2 714.2,160.1 711.6,161.3 709.8,161.8 707.2,161.5 706.3,158.5 699.4,157.5 697.6,155.8 693.2,154.0 688.9,154.9 688.9,161.3 685.4,159.6 682.8,160.4 682.8,158.7 680.1,155.8 678.9,155.6 680.1,154.4 683.6,154.4 683.6,151.8 680.1,151.4Z"/>
<path fill="#c6e4c6" d="M652.4,175.5 653.6,175.0 654.8,173.1 653.8,172.9Z"/>
<path fill="#c6e4c6" d="M652.0,181.8 654.0,182.3 656.6,180.9 655.7,178.3 659.2,177.4 659.5,176.9 658.8,175.0 655.4,176.9 653.4,176.2 653.1,178.3Z"/>
<path fill="#c6e4c6" d="M681.2,190.9 682.9,193.2 687.5,193.5 688.9,190.4 689.4,187.8 687.7,188.7 685.4,190.9 683.3,190.3Z"/>
<path fill="#c6e4c6" d="M679.8,189.9 681.2,190.1 681.2,187.8 680.1,187.8Z"/>
<path fill="#c6e4c6" d="M672.3,182.5 674.4,180.9 675.6,181.8 675.6,183.3 674.4,183.5Z"/>
<path fill="#99ce99" d="M697.4,181.2 700.2,181.9 706.7,181.2 707.2,179.3 712.1,177.8 713.3,174.3 715.4,173.1 715.9,170.1 721.2,168.8 723.4,169.3 726.9,171.4 725.2,172.7 720.7,172.7 721.2,176.0 722.6,177.1 721.2,179.2 718.6,181.8 715.1,184.7 713.7,187.0 714.7,188.7 715.1,190.6 711.2,190.9 710.2,191.8 708.4,190.1 707.2,188.9 705.0,188.7 702.8,189.0 700.8,189.5 698.7,189.2 700.7,187.0 701.4,185.7 700.7,184.0Z"/>
<path fill="#c6e4c6" d="M746.1,187.3 747.9,187.8 747.9,189.0 752.4,189.4 752.1,190.8 750.3,191.1 750.5,192.9 752.4,192.2 752.8,196.0 752.3,197.0 751.4,194.2 749.1,193.9 746.5,195.1 746.3,192.7 744.9,190.4 745.3,188.2Z"/>
<path fill="#c6e4c6" d="M769.2,194.1 771.8,193.5 775.0,192.5 777.4,193.4 779.7,195.6 777.4,196.8 775.8,199.4 777.0,202.0 778.2,204.0 780.2,205.0 781.8,207.8 781.9,211.2 781.4,213.3 778.4,214.9 777.4,216.6 774.4,218.0 774.1,215.0 773.6,214.9 776.2,213.8 778.8,211.6 778.8,207.8 778.8,206.6 777.4,203.8 774.8,200.8 772.5,199.1 773.7,197.2 770.9,195.6Z"/>
<path fill="#c6e4c6" d="M781.4,230.3 782.5,229.4 784.0,231.3 786.3,231.2 788.4,230.5 791.4,230.1 791.9,227.7 793.1,225.6 796.4,225.6 796.8,227.2 797.0,229.8 798.9,231.2 796.8,231.5 796.3,234.3 794.5,235.5 794.2,239.0 791.2,240.0 788.4,238.4 786.3,238.8 783.5,237.9 783.2,235.2 781.4,232.6ZM757.5,223.2 761.3,223.9 762.7,225.8 765.7,228.4 767.4,229.4 769.1,230.7 770.9,231.9 772.3,234.6 773.6,236.2 776.2,238.4 776.8,240.8 775.8,243.0 773.7,242.6 771.6,241.4 769.7,239.8 767.4,237.2 766.2,234.5 764.0,232.0 763.4,230.0 760.8,227.4 758.7,226.6 757.8,224.6ZM774.8,244.7 777.0,243.3 780.5,244.2 782.6,244.2 784.6,244.0 787.7,244.9 791.0,246.2 790.8,248.0 787.8,248.4 784.9,247.3 782.7,247.1 780.5,246.4 776.9,245.7ZM800.6,231.5 802.0,230.6 804.4,231.1 806.7,231.3 809.4,230.1 808.5,232.2 806.4,233.0 804.4,232.5 802.4,232.2 801.0,234.5 803.4,234.5 806.2,234.1 804.1,236.0 803.8,237.2 805.9,239.8 805.0,241.6 803.2,240.7 802.4,237.6 801.1,238.1 802.1,240.2 801.3,242.4 799.7,242.4 798.9,239.0 799.4,235.2 800.3,232.6ZM819.8,234.3 822.4,233.6 825.1,234.3 825.9,236.5 826.8,238.6 828.8,236.4 831.7,235.5 834.6,236.2 837.3,237.4 837.3,248.7 833.8,246.9 832.0,247.5 833.4,245.0 832.0,242.4 829.5,242.3 827.7,240.5 824.2,239.7 823.0,237.8 824.7,236.9 821.6,236.4ZM791.9,247.1 794.5,247.3 793.6,248.3ZM795.4,247.5 798.9,247.3 798.0,248.3ZM800.3,247.5 803.1,247.5 805.9,247.3 805.5,248.2 803.1,249.0 800.6,248.3ZM806.7,250.8 809.4,248.8 812.8,247.5 812.0,248.5 808.5,250.4ZM813.7,229.8 815.1,232.0 814.2,234.3 813.5,231.5ZM811.1,238.4 813.2,238.4 812.8,239.5ZM814.6,237.9 816.8,238.1 819.0,238.1 819.5,239.1 817.4,239.8 815.5,239.0Z"/>
<path fill="#c6e4c6" d="M801.1,205.2 802.2,203.1 801.7,200.8 804.5,201.0 804.5,204.3 803.4,208.1 805.4,209.5 807.6,210.4 807.3,211.1 805.0,209.2 801.8,209.0 801.1,207.4ZM804.1,220.8 806.7,218.0 810.2,216.1 810.3,218.3 812.0,219.9 810.2,223.0 807.6,221.6ZM804.1,213.0 807.6,213.8 810.2,213.5 809.4,215.6 806.7,216.4 805.0,215.6ZM795.9,218.5 798.4,217.2 799.7,214.7 799.7,213.3 798.0,216.4ZM808.1,211.2 810.2,211.2 809.9,213.3Z"/>
<path fill="#c6e4c6" d="M580.8,170.8 583.1,170.6 585.1,171.8 587.3,172.1 588.1,174.8 589.0,177.1 585.0,178.3 581.5,181.2 575.9,183.1 575.9,184.9 568.1,184.9 569.3,184.0 571.9,182.6 574.0,180.9 574.0,178.3 576.3,175.2 579.2,173.8Z"/>
<path fill="#c6e4c6" d="M568.1,184.9 575.9,184.9 575.9,187.8 570.1,187.8 570.1,192.2 568.4,193.0 568.4,196.0 561.4,196.0 562.5,194.2 563.2,192.2 564.1,190.4 565.3,188.7 566.1,186.4Z"/>
<path fill="#c6e4c6" d="M587.3,172.1 589.0,170.7 591.1,170.5 593.8,170.0 596.3,168.9 598.9,168.6 601.6,168.8 603.8,168.9 606.1,168.9 605.6,172.2 604.2,174.3 606.8,177.3 607.7,180.5 608.4,184.4 607.5,187.5 608.6,189.9 612.1,192.2 605.1,195.6 601.6,198.6 596.7,200.0 593.2,196.8 582.7,189.6 575.9,185.6 575.9,183.1 581.5,181.2 585.0,178.3 589.0,177.1 588.1,174.8Z"/>
<path fill="#c6e4c6" d="M606.1,168.9 608.6,168.2 610.3,168.8 609.4,171.4 608.9,173.4 611.2,175.3 611.2,176.7 609.1,177.8 607.7,180.5 606.8,177.3 604.2,174.3 605.6,172.2Z"/>
<path fill="#c6e4c6" d="M585.5,224.1 586.2,216.4 586.2,213.8 591.1,213.7 592.0,218.2 593.2,222.3 590.6,222.8 588.1,223.4Z"/>
<path fill="#c6e4c6" d="M595.8,221.8 597.4,212.6 598.1,209.5 603.3,210.4 608.6,209.8 614.7,209.2 616.4,210.4 615.9,212.1 614.1,216.4 611.7,220.8 608.6,220.9 605.9,224.8 603.9,225.8 601.6,225.4 599.8,224.1 599.0,222.0Z"/>
<path fill="#c6e4c6" d="M605.9,224.8 608.6,220.9 611.7,220.8 614.1,216.4 615.9,212.1 616.4,210.4 617.3,213.8 615.5,215.6 618.2,219.9 616.6,223.4 619.0,229.4 614.3,229.1 610.8,229.1 608.2,228.9 607.7,226.3Z"/>
<path fill="#c6e4c6" d="M642.8,235.3 643.0,231.5 645.7,229.1 645.2,226.5 650.5,225.6 652.2,230.0 650.5,232.6 650.3,234.6 644.4,234.6Z"/>
<path fill="#c6e4c6" d="M650.5,225.6 652.2,223.5 653.8,224.9 657.4,226.7 660.1,226.8 662.7,226.0 664.3,226.1 662.7,228.0 662.7,234.5 663.7,235.8 661.3,237.6 659.5,241.0 656.9,239.0 650.5,234.6 650.3,234.6 650.5,232.6 652.2,230.0Z"/>
<path fill="#c6e4c6" d="M644.4,234.6 650.3,234.6 650.5,234.6 656.9,239.0 659.5,241.0 658.8,244.2 660.1,246.8 660.5,249.0 661.6,251.1 657.4,252.5 652.2,253.0 651.3,249.5 648.7,249.2 644.7,247.1 642.6,243.3 642.4,240.5 644.2,239.8 644.9,237.1Z"/>
<path fill="#c6e4c6" d="M651.0,214.2 652.7,211.2 654.5,208.1 657.3,207.1 660.9,207.8 665.1,211.2 664.1,213.8 666.2,214.7 666.2,217.3 669.7,218.7 674.9,219.0 669.7,224.2 666.2,225.1 664.3,226.1 662.7,226.0 660.1,226.8 657.4,226.7 653.8,224.9 652.2,223.5 648.7,219.4 650.5,218.2Z"/>
<path fill="#c6e4c6" d="M635.3,263.8 638.2,263.9 641.6,260.6 644.2,259.9 648.4,261.8 648.7,266.7 647.8,269.8 645.7,271.7 642.4,271.4 640.0,270.2 639.5,268.4 636.5,265.8Z"/>
<path fill="#e0f0e0" d="M626.0,271.0 626.0,275.9 627.4,279.4 630.9,276.9 635.6,277.5 638.2,273.8 642.4,271.4 640.0,270.2 639.5,268.4 636.5,265.8 635.3,263.8 633.9,263.2 632.0,263.4 627.8,264.6 627.8,271.0Z"/>
<path fill="#c6e4c6" d="M578.3,125.0 579.8,125.1 579.3,126.0 578.6,125.7Z"/>
<path fill="#99ce99" d="M386.6,176.6 390.7,176.6 397.3,178.6 402.2,178.6 402.2,177.8 405.2,177.8 407.8,179.7 408.6,181.4 410.7,182.6 411.6,182.1 413.9,181.2 415.6,183.0 417.4,185.2 418.1,187.1 421.4,187.8 421.4,187.8 420.3,191.3 420.3,194.2 421.4,197.0 423.5,200.0 426.1,201.4 429.6,200.7 432.2,200.0 433.1,196.5 436.6,195.6 439.2,195.6 438.3,199.1 437.5,200.8 435.4,201.9 432.2,202.0 431.5,203.1 433.1,205.0 430.1,206.6 430.1,207.8 428.8,206.1 427.0,205.2 424.8,205.1 422.6,205.7 420.5,204.6 418.2,204.1 415.9,203.8 413.9,202.6 410.4,201.2 408.2,200.5 406.9,198.6 407.2,195.6 405.2,192.7 403.5,190.7 401.7,189.0 399.9,186.6 398.2,184.7 395.2,182.6 393.8,179.2 390.8,177.9 390.8,180.9 393.8,183.5 395.5,187.0 397.3,188.6 398.2,190.8 399.9,192.9 398.5,192.5 396.3,191.1 395.2,188.7 393.6,187.3 392.1,185.7 390.3,183.5 388.6,180.2 387.9,178.2Z"/>
<path fill="#99ce99" d="M456.0,217.8 457.6,216.0 459.3,214.2 461.5,213.7 463.6,213.0 466.3,211.4 466.6,212.4 464.5,213.8 463.6,216.8 464.9,219.9 468.9,220.8 473.2,222.2 472.7,226.0 474.1,229.4 474.1,230.8 469.2,230.0 469.8,234.6 468.9,240.2 468.0,239.5 463.6,236.9 459.3,232.9 456.7,232.2 453.5,230.5 454.0,227.9 455.8,226.0 455.8,223.8 456.0,221.6 455.1,220.4Z"/>
<path fill="#99ce99" d="M468.2,264.6 469.8,263.2 471.0,266.4 471.5,268.4 472.7,272.4 474.1,272.8 471.5,275.4 471.8,279.7 469.4,282.3 468.9,285.8 468.0,288.4 469.2,291.8 468.0,295.3 467.1,299.6 465.9,304.0 465.7,309.2 466.3,312.6 464.5,316.1 464.9,320.4 465.4,323.0 471.5,323.6 471.3,328.1 474.1,328.8 470.6,329.1 468.4,327.9 466.3,326.5 462.8,324.8 461.5,322.6 460.2,320.4 460.2,318.2 459.3,316.1 459.3,313.5 460.5,310.9 462.8,309.2 461.9,306.6 461.9,304.4 462.4,302.2 463.2,299.9 462.8,297.4 464.2,294.4 465.9,291.0 467.0,288.9 466.3,286.6 466.3,283.2 467.3,279.7 468.0,276.2 468.2,272.8 468.7,270.6 468.7,268.4Z"/>
<path fill="#99ce99" d="M472.7,272.4 474.1,272.4 475.3,270.7 478.8,272.4 479.7,271.0 481.8,271.4 484.6,274.2 486.3,274.5 490.4,276.6 489.0,280.1 492.5,280.6 493.7,280.4 495.8,277.3 497.2,278.8 497.3,280.1 493.7,282.1 490.5,285.3 489.5,289.2 489.1,291.8 491.2,294.4 492.1,296.2 490.7,298.8 488.1,300.0 485.4,299.5 482.8,300.5 482.3,303.6 480.0,304.5 477.6,304.0 477.6,306.6 479.9,306.9 478.1,308.2 477.1,310.0 474.8,310.8 473.2,312.6 476.2,314.7 474.4,316.0 473.2,317.8 470.6,320.4 471.7,323.6 465.4,323.0 464.9,320.4 464.5,316.1 466.3,312.6 465.7,309.2 465.9,304.0 467.1,299.6 468.0,295.3 469.2,291.8 468.0,288.4 468.9,285.8 469.4,282.3 471.8,279.7 471.5,275.4 474.1,272.8ZM471.3,324.3 472.9,326.0 475.6,325.9 477.3,327.7 475.0,328.2 471.3,328.1Z"/>
<path fill="#99ce99" d="M585.9,140.3 583.2,140.5 583.2,142.8 582.0,143.1 585.9,144.0 586.4,143.5 585.9,142.8 586.2,141.2Z"/>
<path fill="#99ce99" d="M573.6,143.5 575.9,143.5 578.1,142.9 580.3,142.4 580.6,140.2 580.3,139.1 578.0,138.9 577.1,138.3 578.4,137.2 576.6,137.2 573.6,138.9 573.6,140.5 574.5,141.9Z"/>
<path fill="#99ce99" d="M575.7,160.1 576.8,160.1 580.3,160.8 579.2,161.8 578.0,164.1 578.9,165.3 578.0,167.0 578.2,168.4 575.6,168.8 575.7,166.2 574.5,165.8 575.7,163.2Z"/>
<path fill="#99ce99" d="M619.9,151.4 620.8,149.7 623.9,150.0 629.9,149.0 631.1,149.9 627.8,152.8 623.9,153.3 619.9,152.3Z"/>
<path fill="#99ce99" d="M627.8,152.8 631.1,149.9 637.5,149.3 640.3,152.1 640.3,154.0 643.0,154.5 641.0,157.1 635.6,157.1 630.9,156.8 630.4,155.4 628.6,155.2 626.5,153.0Z"/>
<path fill="#99ce99" d="M626.0,164.1 627.8,162.2 631.3,161.3 634.8,161.3 637.0,160.6 636.5,162.2 633.0,162.5 631.3,163.2 630.7,164.8 633.0,167.0 631.3,167.9 631.3,169.6 629.5,169.6 628.3,167.9 627.8,166.5ZM632.1,171.4 634.6,171.7 637.0,171.9 633.9,172.4Z"/>
<path fill="#99ce99" d="M615.0,152.3 619.9,152.3 618.2,154.0 615.0,153.9Z"/>
<path fill="#99ce99" d="M636.5,162.2 637.0,160.6 640.0,160.1 642.1,161.5 644.1,161.9 646.1,161.5 649.6,160.1 652.2,160.1 654.8,161.5 658.3,162.0 661.1,162.0 663.6,161.0 667.1,161.7 667.4,163.4 669.3,164.1 668.3,166.5 669.3,168.4 665.1,168.4 660.9,169.1 657.4,169.1 655.2,169.1 654.3,170.7 654.0,169.3 651.3,169.3 647.8,170.3 644.4,169.1 642.6,170.1 640.0,169.3 638.8,167.9 637.0,166.2 637.9,164.4 636.5,163.2Z"/>
<path fill="#99ce99" d="M645.2,111.6 648.7,112.4 651.3,113.5 654.0,112.9 656.0,114.2 658.4,114.3 660.6,115.0 662.7,115.9 661.8,118.0 659.2,118.1 656.6,118.1 654.0,118.1 651.3,120.2 653.7,120.5 655.7,121.6 658.4,121.8 660.9,120.7 660.9,118.5 663.2,117.3 665.6,117.5 667.9,117.6 667.9,114.2 671.4,115.0 672.3,116.9 674.9,115.5 677.0,114.6 679.2,114.2 681.5,114.7 683.6,114.2 687.1,114.2 689.4,113.5 691.9,114.1 694.1,113.3 696.7,111.9 698.8,112.0 700.9,111.8 702.8,112.8 705.5,113.0 708.1,113.6 710.7,114.7 708.1,112.4 707.7,109.8 709.1,107.4 711.6,106.4 713.6,106.5 715.7,106.4 717.7,107.2 717.3,109.8 717.2,112.0 718.6,113.6 720.3,113.6 720.4,111.4 720.0,109.3 722.0,107.0 724.6,108.1 727.3,107.9 729.4,106.9 731.7,107.6 732.5,105.8 734.7,105.3 736.9,106.2 739.1,106.1 741.3,105.3 743.0,104.1 745.6,103.3 748.2,103.1 750.5,103.5 752.5,102.0 754.8,102.5 757.0,102.2 759.2,102.8 761.3,101.0 763.6,102.1 765.7,101.3 768.1,101.0 770.4,100.5 772.7,99.6 775.1,100.9 777.9,100.6 780.2,100.1 782.3,101.4 784.4,101.9 786.7,101.8 789.3,103.1 787.3,104.0 784.9,103.5 783.2,105.0 785.8,104.2 788.4,105.1 790.6,105.0 792.8,105.0 795.0,104.8 797.1,105.5 799.5,106.2 802.0,105.3 804.4,105.2 806.7,106.0 808.8,106.2 810.8,107.0 812.8,107.2 816.3,106.7 818.1,109.8 820.8,110.2 823.3,109.0 825.7,108.5 828.0,109.8 830.3,109.1 833.1,108.6 835.5,107.2 837.6,107.5 839.7,106.9 841.8,107.2 843.9,107.1 846.0,107.6 848.2,108.6 850.7,108.1 853.0,109.0 855.6,109.4 858.2,110.0 860.5,109.1 862.9,109.6 865.2,109.8 867.8,111.1 870.5,112.1 874.0,112.2 876.5,113.2 879.2,112.4 881.8,112.1 884.4,111.6 886.5,112.8 888.8,113.3 889.7,111.6 891.9,111.1 894.0,111.6 896.3,111.3 898.4,112.1 900.7,112.6 902.9,113.6 905.4,113.3 905.4,120.2 902.8,120.9 901.0,120.7 902.8,122.1 904.2,123.9 902.4,125.1 900.4,125.5 898.4,125.8 896.5,126.8 894.4,127.0 892.3,127.2 888.8,128.9 886.3,128.4 883.9,129.0 881.5,129.2 879.1,128.4 876.6,128.9 875.7,132.4 874.0,132.9 876.2,135.5 874.0,137.9 872.5,139.6 870.5,140.7 867.8,142.4 864.7,144.5 863.0,141.0 862.4,138.4 863.0,135.8 865.2,132.7 866.6,131.0 868.2,129.7 870.5,129.2 872.4,127.8 874.7,127.2 876.6,125.8 877.4,124.6 875.3,124.7 873.5,125.9 871.3,125.9 870.5,127.8 867.7,127.2 865.2,125.9 863.5,128.2 860.9,129.2 858.8,129.6 856.7,129.7 854.7,130.3 852.5,130.8 850.4,129.9 847.8,130.1 845.1,130.1 842.5,129.4 839.9,130.3 838.4,131.8 836.4,132.7 834.6,134.5 832.0,135.0 829.9,137.0 827.2,137.9 829.1,138.7 831.2,139.3 833.2,139.9 835.2,138.9 838.0,140.7 836.4,143.6 836.4,146.2 836.1,149.2 834.6,150.6 833.4,152.3 831.8,154.3 829.4,155.2 826.8,157.5 823.3,158.7 821.2,158.0 819.3,159.6 819.8,158.4 820.3,155.2 823.3,154.5 826.5,149.2 822.4,150.0 819.5,148.1 813.7,146.6 813.4,145.7 811.1,141.7 806.4,140.2 802.0,140.5 800.6,142.8 798.9,145.7 796.8,147.1 794.9,146.6 790.1,145.9 784.9,147.4 779.7,147.1 776.2,145.7 770.1,145.4 769.2,143.6 764.0,142.8 762.2,146.2 757.0,146.2 751.7,144.8 748.2,146.2 744.4,147.6 743.5,147.6 739.5,146.2 736.9,144.5 730.8,144.8 726.9,140.5 723.8,138.9 719.4,139.3 715.1,138.9 714.7,137.0 710.7,137.2 704.6,138.4 698.5,139.6 697.6,141.9 698.5,144.5 693.2,144.5 687.1,144.8 681.0,143.6 676.1,145.7 673.2,146.6 673.2,149.7 675.8,151.9 676.7,152.8 674.0,154.0 674.4,156.2 674.0,158.4 675.8,160.3 672.3,160.4 669.7,158.9 667.1,158.7 660.9,157.5 658.3,155.9 655.7,154.9 657.4,151.8 657.8,151.3 660.4,150.0 660.9,146.9 657.4,146.4 653.1,145.5 650.5,142.2 646.1,142.6 647.8,140.2 645.1,136.5 640.3,135.5 639.1,132.7 640.0,129.8 643.5,129.1 640.9,128.0 639.6,128.0 643.5,126.3 646.1,123.9 643.0,121.1 643.5,119.0 641.7,117.1 643.5,115.5 640.9,114.2 641.7,112.8ZM284.7,117.4 287.0,117.9 289.0,116.8 291.5,117.9 294.3,118.1 293.4,119.4 291.3,120.5 289.0,121.3 286.8,120.9 284.7,120.2ZM625.3,138.6 630.9,138.6 630.9,137.6 628.1,137.0ZM681.0,109.0 683.6,110.2 685.9,111.1 688.3,110.9 690.6,110.5 688.9,107.2 690.5,105.8 692.4,104.6 694.5,103.8 696.7,103.2 698.9,102.7 701.1,102.0 703.4,101.0 706.0,101.5 708.1,99.5 710.7,99.8 708.5,100.0 706.3,99.4 704.3,100.3 702.2,100.6 700.0,100.1 698.0,100.9 695.9,100.8 693.7,101.0 692.0,102.4 690.2,103.7 688.0,103.8 686.4,105.1 685.0,106.8 682.8,107.2ZM757.0,95.6 759.1,97.1 761.5,97.5 764.0,97.7 766.0,97.4 768.1,97.3 770.2,97.3 772.3,97.3 774.4,97.2 772.7,95.3 770.5,95.5 768.6,94.1 766.3,95.3 764.3,94.5 762.2,93.9 759.8,95.3ZM830.3,102.0 832.3,103.0 834.5,102.9 836.6,102.4 838.7,102.5 840.8,102.9 843.4,102.4 846.0,102.0 848.3,102.3 850.7,102.1 853.0,102.9 851.0,102.0 848.7,103.1 846.7,102.2 844.5,102.1 842.5,101.2 840.5,101.9 838.4,101.3 836.4,101.9 834.3,101.2 832.3,102.0ZM839.0,138.8 840.8,141.9 841.3,145.4 843.4,148.0 841.5,149.2 840.8,151.4 841.7,152.8 839.0,152.8 839.0,149.7 839.7,147.1 839.4,144.5 838.8,142.5 838.5,140.5ZM902.8,109.5 905.4,109.0 905.4,110.0ZM675.8,112.8 678.4,113.3 676.7,113.8Z"/>
<path fill="#99ce99" d="M651.0,178.6 652.0,181.8 653.1,178.3 653.4,175.3 652.4,175.5Z"/>
<path fill="#99ce99" d="M669.3,168.4 668.3,166.5 669.3,164.1 671.8,165.5 674.9,164.4 676.5,166.3 678.4,168.1 681.9,169.3 685.2,168.2 686.8,167.9 690.6,166.7 694.1,167.9 697.6,169.5 698.0,171.2 696.7,174.0 697.3,178.3 699.0,179.2 697.4,181.2 700.7,184.0 701.4,185.7 700.7,187.0 698.7,189.2 696.4,188.7 694.1,188.9 691.1,188.2 690.3,185.9 686.8,187.0 683.6,186.1 680.1,184.4 679.8,182.6 678.4,180.5 676.5,180.2 675.8,181.1 674.9,180.9 674.6,178.3 671.4,175.7 670.5,173.1 671.4,170.8Z"/>
<path fill="#99ce99" d="M765.9,197.7 767.8,199.1 767.4,202.2 769.4,201.4 772.7,201.2 774.1,204.3 775.5,205.7 775.3,207.9 770.9,208.1 769.9,209.5 770.8,212.6 767.4,210.9 767.3,209.5 765.7,209.7 765.5,212.4 764.3,215.6 764.5,217.0 766.4,219.0 767.4,220.9 769.2,222.2 767.8,223.0 766.0,221.6 765.2,221.1 762.7,219.0 763.4,215.6 765.0,212.4 764.1,209.5 762.6,206.7 763.4,204.6 761.3,200.8 762.6,198.8Z"/>
<path fill="#99ce99" d="M766.0,221.6 767.8,223.0 769.2,222.2 771.6,224.6 771.8,228.0 773.2,230.5 771.6,230.6 769.7,229.5 768.0,228.0 766.7,225.6 766.5,223.6ZM782.5,229.4 785.6,228.2 788.4,227.4 790.1,225.1 792.8,223.4 795.0,220.9 796.6,222.0 798.9,223.9 797.5,225.4 796.4,225.6 793.1,225.6 791.9,227.7 791.4,230.1 788.4,230.5 786.3,231.2 784.0,231.3Z"/>
<path fill="#99ce99" d="M634.9,178.1 638.2,178.6 641.7,179.3 645.2,178.3 647.5,178.8 651.0,178.6 652.0,181.8 651.0,184.7 649.1,183.3 648.0,181.1 649.6,185.2 650.8,187.5 652.2,189.6 653.3,191.5 653.9,193.4 655.5,194.8 634.8,194.8 634.8,181.8Z"/>
<path fill="#99ce99" d="M619.9,282.5 621.7,282.8 626.0,282.1 626.0,275.9 627.4,279.4 630.9,276.9 635.6,277.5 638.2,273.8 642.4,271.4 645.7,271.7 646.8,275.0 647.1,279.4 648.5,279.4 647.8,282.3 645.2,284.9 643.5,287.2 641.3,288.1 640.0,290.1 638.3,291.6 636.0,291.8 633.2,292.3 630.4,292.0 628.2,292.5 626.0,293.2 623.2,292.4 623.1,289.2 621.3,285.8Z"/>
<path fill="#99ce99" d="M892.6,292.5 895.4,294.4 897.5,296.2 898.4,298.1 900.6,297.7 902.8,298.3 901.5,300.9 900.0,302.2 897.2,305.0 896.3,304.5 896.7,302.2 894.6,301.0 896.1,298.8 895.8,296.2 894.2,294.4ZM892.6,303.1 895.4,305.2 893.2,307.4 892.6,308.8 890.0,310.0 889.1,312.5 886.2,313.7 883.6,313.0 881.8,312.3 884.4,309.5 886.4,308.1 888.8,307.4 890.5,305.4Z"/>
<path fill="#5aab5a" d="M500.8,225.8 502.7,227.5 503.8,229.8 503.8,232.9 506.4,233.8 508.2,233.9 510.3,234.8 512.5,235.5 513.8,237.6 516.2,238.2 518.6,237.9 521.3,237.8 523.9,239.3 526.5,241.4 529.5,242.1 530.3,245.4 530.0,248.5 528.3,250.3 526.5,252.0 524.7,253.3 523.9,255.4 523.0,258.9 522.5,261.1 523.0,263.2 521.9,265.1 521.3,267.2 519.5,270.7 517.8,272.8 515.6,273.6 513.4,273.1 510.3,274.5 508.3,275.6 506.8,277.1 506.2,280.6 504.7,283.5 503.1,284.9 502.1,286.6 500.0,288.7 497.9,291.5 497.7,289.2 493.7,286.3 490.5,285.3 493.7,282.1 497.3,280.1 497.2,278.8 495.8,277.3 496.3,274.7 494.4,274.5 493.8,271.6 490.0,271.2 489.5,267.7 490.7,264.4 489.3,262.9 489.1,261.2 486.0,261.2 485.5,256.8 482.8,256.3 480.2,254.6 477.6,253.7 477.1,250.2 476.7,249.9 474.8,250.1 471.5,252.0 469.8,252.0 467.8,252.0 468.0,249.4 465.0,250.2 463.6,248.8 462.1,245.6 464.0,241.9 468.9,240.2 469.8,234.6 469.2,230.0 474.1,230.8 475.9,231.2 479.4,228.6 478.5,225.8 481.1,226.0 484.6,225.1 485.1,223.9 486.7,224.2 486.3,227.7 486.7,230.5 489.0,230.6 492.5,229.6 493.3,229.6 496.3,228.7 499.1,228.9Z"/>
<path fill="#5aab5a" d="M599.8,131.5 601.1,128.9 599.8,126.3 601.5,125.0 603.3,124.0 606.4,124.0 608.6,122.0 611.2,120.8 612.9,118.5 615.2,116.6 617.3,114.5 620.3,114.0 622.5,111.9 625.0,112.6 627.2,111.0 629.5,110.7 631.7,109.5 634.0,109.1 636.5,109.8 639.0,111.1 641.7,110.2 645.2,111.6 641.7,112.8 640.0,111.6 635.6,113.3 627.8,113.3 626.0,114.2 622.5,114.2 619.0,116.8 616.4,118.5 615.5,121.1 612.9,122.0 612.1,126.3 612.9,128.9 611.2,130.6 609.4,130.3 605.9,132.0 603.3,132.4Z"/>
<path fill="#5aab5a" d="M611.2,130.6 612.9,128.9 612.1,126.3 612.9,122.0 615.5,121.1 616.4,118.5 619.0,116.8 622.5,114.2 626.0,114.2 627.8,113.3 632.1,115.0 633.0,118.5 629.5,119.0 628.3,121.1 625.7,122.2 623.4,123.7 621.3,126.3 621.1,128.0 623.9,129.2 622.3,131.4 620.3,133.2 619.0,135.5 616.1,136.9 613.8,136.9 612.9,135.0 610.8,131.8Z"/>
<path fill="#5aab5a" d="M627.8,113.3 635.6,113.3 640.0,111.6 641.7,112.8 640.9,114.2 643.5,115.5 641.7,117.1 643.5,119.0 643.0,121.1 646.1,123.9 643.5,126.3 639.6,128.0 637.2,128.0 634.8,128.5 630.9,129.1 628.3,127.5 628.1,124.6 630.4,122.5 632.6,121.0 635.1,120.2 633.0,118.5 632.1,115.0Z"/>
<path fill="#5aab5a" d="M605.2,136.7 605.4,134.1 607.5,133.9 609.4,132.9 609.4,135.3 608.6,137.2 607.7,137.7 606.1,137.7ZM610.3,136.3 612.9,135.8 612.9,137.6 610.7,137.6Z"/>
<path fill="#5aab5a" d="M587.6,136.2 585.9,135.8 587.6,134.4 588.0,133.1 584.1,132.9 585.9,131.3 582.4,131.3 580.6,133.2 581.5,135.8 582.7,137.6 585.9,137.6ZM578.4,133.7 580.3,131.7 579.2,132.5ZM588.5,128.0 589.4,128.5 588.7,129.1Z"/>
<path fill="#5aab5a" d="M588.0,157.7 592.3,158.9 596.3,159.2 596.7,160.3 594.5,161.3 592.3,162.2 590.6,164.4 591.4,165.8 589.9,167.7 587.6,169.1 585.5,169.8 583.2,169.3 581.5,170.5 580.1,169.3 578.2,168.4 578.0,167.0 578.9,165.3 578.0,164.1 579.2,161.8 580.3,160.8 576.8,160.1 575.7,160.1 574.9,158.4 577.1,157.1 579.3,158.0 581.5,157.3 585.0,157.5ZM595.3,164.3 597.0,163.9 596.7,164.8Z"/>
<path fill="#5aab5a" d="M595.5,144.3 598.4,143.8 601.6,144.3 601.8,145.0 602.3,147.1 601.2,147.1 598.4,146.2Z"/>
<path fill="#99ce99" d="M607.9,150.6 608.6,150.7 613.8,150.6 615.2,148.5 617.3,148.0 620.8,148.7 619.9,151.4 616.4,152.3 612.8,151.9 609.3,151.8Z"/>
<path fill="#5aab5a" d="M604.2,157.0 602.8,154.7 603.3,153.3 606.8,153.3 609.3,151.8 612.8,151.9 615.0,152.3 615.0,153.9 612.6,154.4 612.8,156.3 614.8,157.5 615.9,159.4 619.0,160.3 621.4,161.4 623.2,163.2 623.1,163.9 620.8,162.7 619.9,164.1 621.0,165.3 619.0,167.0 618.5,167.0 619.0,164.4 618.2,163.4 615.5,161.8 612.6,160.6 609.4,158.5 608.9,156.8 606.5,155.9ZM612.9,167.0 615.5,166.4 618.2,166.7 617.5,169.3 615.4,167.9 612.9,167.7ZM605.4,161.8 608.0,161.8 607.9,164.9 605.8,165.3Z"/>
<path fill="#5aab5a" d="M615.9,139.5 618.0,138.4 620.3,138.5 622.5,137.9 625.3,138.6 631.3,138.8 632.8,141.5 632.3,143.6 633.0,145.4 630.6,147.8 624.3,147.3 620.8,145.7 617.3,144.5 616.6,141.9Z"/>
<path fill="#99ce99" d="M612.4,145.7 617.3,144.5 620.8,145.7 623.9,147.1 620.8,148.7 617.3,148.0 615.2,148.5Z"/>
<path fill="#5aab5a" d="M652.0,181.9 654.0,182.3 656.6,180.9 655.7,178.3 659.5,176.9 661.8,177.6 664.4,178.8 669.1,182.3 672.3,182.5 674.4,183.5 676.0,183.5 676.3,184.9 678.4,186.6 678.7,188.7 679.8,189.9 680.8,190.3 681.2,190.9 682.9,193.2 687.5,193.5 688.2,194.8 687.1,198.2 681.9,200.0 676.7,200.7 673.2,203.4 667.9,202.7 666.5,204.3 665.8,204.5 665.3,202.6 663.6,200.8 661.8,198.2 659.5,195.6 658.3,192.2 656.1,189.6 654.8,187.8 653.6,186.2 652.7,184.4 651.5,184.4Z"/>
<path fill="#5aab5a" d="M710.2,191.8 711.2,190.9 715.1,190.6 714.7,188.7 713.7,187.0 715.1,184.7 718.6,181.8 721.2,179.2 722.6,177.1 721.2,176.0 720.7,172.7 725.2,172.7 726.9,171.4 729.0,173.4 728.2,176.6 729.9,179.2 732.9,180.4 731.0,183.0 736.0,185.4 739.5,186.6 744.9,187.1 744.9,184.5 746.1,184.4 746.3,185.6 747.9,186.6 751.9,186.3 751.0,184.5 755.2,182.3 758.7,181.9 761.0,183.8 759.1,185.6 757.3,186.8 756.3,189.2 754.2,191.3 754.0,194.4 752.8,196.0 752.4,192.2 750.5,192.9 750.3,191.1 752.1,190.8 752.4,189.4 747.9,189.0 747.9,187.8 746.1,187.3 745.3,188.2 744.9,190.4 746.3,192.7 746.5,195.1 743.0,196.0 741.8,198.2 739.2,200.0 737.3,202.3 734.8,204.0 733.2,205.2 731.3,206.0 731.1,209.8 730.4,213.0 729.6,215.0 727.6,217.3 726.4,218.9 724.7,216.4 723.4,213.0 721.7,209.5 720.3,206.0 718.9,202.6 718.2,199.6 718.0,196.5 717.3,196.1 714.7,196.8 713.6,195.0 711.6,194.2 713.3,193.5Z"/>
<path fill="#5aab5a" d="M801.0,193.0 802.4,189.4 803.9,189.6 803.2,192.2 802.0,194.8Z"/>
<path fill="#5aab5a" d="M813.7,186.5 815.1,186.7 814.6,187.4 814.0,187.2Z"/>
<path fill="#3a8a3a" d="M344.9,112.2 348.4,112.4 351.1,112.7 353.6,113.5 357.1,112.4 359.9,113.0 362.4,111.7 365.1,112.4 367.6,111.0 370.4,111.1 372.9,112.4 375.2,113.1 377.5,112.6 379.8,111.9 382.3,111.8 384.6,112.1 386.8,113.3 389.4,114.0 392.1,114.5 390.3,115.4 392.5,116.1 394.7,114.8 396.9,116.3 399.0,115.2 402.5,114.2 406.0,113.6 408.2,114.9 410.4,115.8 413.0,115.4 415.3,114.3 417.7,114.7 420.0,115.4 423.5,114.7 424.4,113.3 422.6,110.7 425.2,108.3 428.7,109.8 430.5,112.4 433.1,114.2 435.2,114.8 437.5,115.0 437.5,112.9 439.5,112.1 441.8,111.9 444.4,112.4 446.5,113.4 448.8,112.9 447.9,115.0 449.2,116.8 447.4,118.0 445.3,118.0 443.0,117.4 440.9,118.5 441.8,120.2 438.3,121.6 436.1,121.8 434.0,122.3 431.6,123.2 429.6,124.6 427.0,127.2 425.6,130.6 428.7,131.1 429.6,134.1 431.6,134.8 433.6,135.1 435.7,134.4 437.8,135.9 440.7,135.2 442.7,137.0 445.0,138.3 447.4,137.4 447.6,141.0 449.6,142.0 450.5,144.0 452.3,143.6 453.5,141.9 453.2,139.3 452.3,137.9 455.8,136.7 457.5,134.1 455.3,133.1 454.0,131.1 455.8,128.9 454.4,127.1 454.9,124.9 457.5,124.6 460.2,125.1 463.0,124.7 465.4,126.3 468.9,127.2 469.8,130.6 472.4,131.8 475.9,131.0 478.3,128.4 479.5,131.0 482.0,132.4 483.7,133.7 484.6,135.8 488.1,137.6 490.7,139.3 493.7,141.9 491.6,143.8 488.1,145.7 485.9,145.2 483.7,146.1 481.5,146.3 479.4,145.7 477.2,146.8 475.0,145.9 472.7,146.0 471.5,148.0 468.0,151.1 470.6,148.8 474.1,148.0 476.3,147.2 478.5,148.0 478.8,149.2 475.9,149.7 477.6,151.4 478.5,152.8 481.1,153.5 483.7,153.7 486.3,151.8 486.3,153.5 483.7,154.5 480.2,155.8 476.7,157.5 475.5,156.3 478.5,154.4 475.9,154.5 474.1,155.2 472.7,153.7 472.7,151.3 470.3,150.7 468.4,152.8 466.3,154.9 460.5,154.9 457.5,156.8 453.0,157.7 453.2,158.7 446.0,160.1 447.2,158.4 447.1,154.4 445.3,153.5 443.0,151.8 436.8,149.2 432.2,149.5 425.6,147.3 424.9,148.0 376.3,148.0 376.0,147.4 372.9,145.7 370.8,144.5 368.5,144.5 368.0,142.2 365.9,140.2 363.6,138.8 364.1,136.0 361.0,134.8 358.0,131.7 354.5,129.2 351.0,130.8 347.5,128.9 344.9,128.4ZM483.7,117.3 481.7,119.0 479.4,120.2 477.6,123.7 474.8,123.2 472.4,124.6 469.9,123.1 467.1,123.7 464.2,123.0 461.9,121.1 459.6,120.1 457.3,120.2 454.9,120.6 456.7,118.5 458.6,117.6 460.6,117.1 462.8,117.6 463.6,115.0 461.3,114.6 459.1,113.7 456.7,114.2 454.1,113.8 452.4,111.4 449.7,111.6 447.3,110.8 445.0,110.5 442.7,111.6 440.1,112.1 437.9,111.0 435.7,109.8 435.7,106.4 438.1,106.2 440.3,105.2 442.7,105.1 444.9,105.9 447.1,104.5 449.2,106.0 451.4,105.1 454.0,106.1 456.7,106.7 458.8,107.5 460.9,108.4 463.0,109.0 465.4,108.8 467.5,110.2 470.3,109.3 472.4,111.0 474.1,113.3 476.3,115.5 479.4,115.9 481.8,115.9ZM407.8,113.3 409.8,112.7 412.0,113.5 413.9,112.2 412.1,110.5 409.5,110.7 408.6,108.1 406.4,108.0 404.8,105.9 402.5,106.0 399.8,106.1 397.3,107.2 394.9,107.3 392.5,107.1 390.3,105.8 385.1,107.2 386.8,110.7 388.5,111.8 390.3,112.8 393.8,114.2 396.2,114.8 398.4,113.4 400.8,113.8ZM372.9,108.3 376.3,109.5 378.9,109.0 381.6,109.0 384.2,109.0 386.6,108.2 388.6,106.4 385.9,104.3 383.9,104.7 381.9,103.1 379.8,103.8 377.2,103.4 374.6,104.1 373.7,106.0 372.0,107.2ZM454.9,100.6 452.7,100.8 450.6,99.6 448.4,99.5 446.2,100.5 444.1,101.1 442.0,99.6 439.9,99.8 437.8,100.9 435.7,100.3 438.0,98.3 440.9,97.7 437.5,96.0 440.1,94.9 442.7,93.7 432.2,92.1 434.5,92.4 436.5,90.8 439.0,91.9 440.9,90.4 443.0,90.9 445.0,91.0 446.8,88.6 448.9,88.9 450.9,89.5 452.9,88.7 454.9,88.8 457.2,89.6 459.6,88.2 461.9,89.7 464.2,89.0 466.6,89.2 468.9,88.8 470.8,89.6 472.8,89.9 474.8,90.0 476.9,88.5 478.8,90.7 480.9,89.0 482.8,89.9 479.4,91.6 477.2,92.7 474.9,93.5 472.4,93.0 470.2,94.1 468.0,95.4 465.4,95.1 462.6,94.6 460.2,96.0 458.4,98.0 457.0,99.8ZM451.4,103.6 449.3,103.8 447.2,102.6 445.0,102.5 442.9,104.2 440.8,102.7 438.6,102.9 436.5,104.0 434.3,104.2 432.2,103.4 430.5,100.8 433.1,100.9 435.7,100.8 437.7,101.7 439.8,100.5 441.8,102.3 443.8,102.0 445.8,102.4 447.9,101.5 451.4,102.4ZM439.2,97.3 437.1,97.5 435.1,96.2 433.0,96.0 430.8,97.6 428.7,96.8 426.5,94.8 423.5,94.2 426.0,94.0 428.0,92.3 430.5,92.1 439.2,93.5ZM418.2,104.8 420.9,105.3 423.5,106.4 420.4,106.8 418.2,109.0 416.0,106.9 413.0,106.7 415.4,105.1ZM434.0,106.9 431.6,107.1 429.2,105.8 426.8,105.7 424.4,106.7 424.4,104.6 426.5,104.0 428.7,105.5 430.9,105.2 433.1,104.6ZM406.0,102.9 403.7,103.4 401.3,102.5 399.0,103.8 397.0,102.5 394.8,104.1 392.8,102.4 390.7,102.5 388.6,102.9 386.8,100.8 388.8,100.1 390.9,99.9 392.9,100.6 395.0,101.2 397.0,99.9 399.0,100.3 401.2,101.7 403.6,101.6 406.0,101.2ZM420.9,102.9 418.6,103.1 416.4,101.8 414.1,101.6 411.8,103.3 409.5,102.5 409.5,100.3 411.6,101.1 413.7,100.8 415.8,99.6 417.9,99.4 420.0,100.1ZM388.6,100.3 386.5,100.6 384.3,99.6 382.2,99.6 380.2,101.4 378.1,100.8 381.0,100.4 383.3,98.6 385.8,99.9ZM416.5,97.7 414.3,97.7 412.2,96.3 410.1,96.0 407.8,96.8 411.3,95.4 413.7,95.1 415.8,96.8 418.2,96.3ZM450.5,122.8 447.9,123.2 445.3,122.1 442.7,123.2 439.2,122.0 441.8,118.8 443.9,120.1 446.2,119.4 448.7,120.1 450.5,122.0ZM487.6,150.4 490.5,150.8 493.3,151.8 495.7,152.8 498.2,151.9 499.1,150.4 497.7,148.8 497.2,147.1 495.6,145.5 493.3,145.9 494.2,143.5 491.1,145.0 490.4,147.2 488.0,148.1ZM375.6,149.0 372.0,148.1 369.4,146.8 367.1,145.0 370.2,145.4 372.0,147.3 374.6,147.4ZM360.6,141.0 358.9,139.1 361.0,139.3 362.0,141.9ZM478.7,146.6 480.8,146.7 482.8,147.3 483.2,147.8 480.2,147.4ZM478.8,151.8 480.9,151.9 482.8,152.5 482.0,153.2 479.4,152.6ZM417.4,113.3 419.4,113.2 421.4,114.5 423.5,113.6 424.4,112.2 422.3,111.0 420.0,111.9Z"/>
<path fill="#3a8a3a" d="M588.0,157.7 589.0,155.8 589.0,153.2 587.3,151.1 585.0,150.9 582.9,149.9 582.9,148.8 585.7,148.1 588.5,148.5 588.0,146.7 591.4,147.1 593.9,144.7 595.5,144.3 598.4,146.2 601.2,147.1 605.4,148.0 604.4,150.4 601.6,152.6 603.3,153.3 602.8,154.7 604.2,157.0 601.6,158.2 598.1,157.5 596.3,159.2 592.3,158.9ZM606.1,158.5 607.7,158.5 607.3,161.1 606.3,160.8Z"/>
<path fill="#3a8a3a" d="M597.0,143.8 599.0,141.0 601.4,141.3 603.7,140.5 601.6,143.1 601.6,144.3 598.4,143.8Z"/>
<path fill="#3a8a3a" d="M601.6,152.6 604.4,150.4 607.9,150.6 609.3,151.8 606.8,153.3 603.3,153.3Z"/>
<path fill="#5aab5a" d="M819.7,174.0 822.4,171.4 825.1,171.3 827.7,171.2 830.0,168.4 832.9,168.1 835.2,165.3 835.5,162.3 837.8,161.1 839.0,164.4 837.3,166.7 837.1,170.5 835.2,172.2 832.9,172.7 830.0,173.3 828.2,174.8 826.8,172.9 823.3,173.4 819.8,174.3ZM835.9,161.0 836.1,157.8 837.3,156.0 838.5,154.2 841.7,156.3 845.1,157.8 843.6,159.6 841.3,160.1 839.5,158.9 837.3,159.2ZM817.6,175.2 819.8,174.1 821.6,175.7 820.5,178.5 818.4,178.8 818.4,176.2ZM822.4,174.1 826.1,173.6 825.4,175.2 823.3,176.0Z"/>
<path fill="#3a8a3a" d="M812.3,167.4 815.1,166.0 817.0,168.8 817.0,171.4 815.5,172.6 812.0,173.3 811.8,170.5Z"/>
<path fill="#3a8a3a" d="M790.1,270.7 792.8,269.0 795.4,268.6 798.9,267.6 801.2,267.5 803.2,266.4 804.6,262.7 807.1,261.2 809.4,258.9 812.5,256.8 814.9,258.7 817.6,258.7 818.3,256.7 819.0,254.6 821.0,253.8 822.8,252.5 825.1,253.7 827.7,253.7 830.0,254.0 829.4,256.4 828.2,258.6 831.2,260.6 833.2,261.6 834.7,263.2 836.9,263.1 837.9,261.1 838.2,258.9 837.7,256.7 838.5,254.6 839.9,251.4 841.7,254.6 842.0,257.9 844.8,258.7 845.9,260.9 846.0,263.2 846.5,265.7 848.8,266.4 850.7,267.9 852.3,271.6 854.4,273.6 856.3,275.3 858.2,277.1 859.0,279.4 859.1,281.8 858.9,284.1 858.2,286.3 857.4,289.2 855.1,291.8 853.3,295.3 852.8,297.9 849.5,298.6 846.7,300.7 843.7,299.3 841.7,300.2 838.2,299.3 835.5,297.9 834.7,295.0 832.0,294.6 831.3,292.4 831.7,290.1 831.7,289.4 830.3,291.6 828.6,293.4 827.7,293.2 826.5,291.4 825.1,289.8 821.6,288.4 819.0,287.4 816.3,287.7 813.9,289.0 811.1,288.9 807.6,290.1 806.7,291.7 804.7,292.1 802.7,291.8 800.6,291.7 797.1,293.6 793.6,293.4 791.9,292.4 791.7,290.2 792.9,288.4 791.9,284.9 791.2,282.6 790.1,280.6 788.9,278.0 789.3,275.4 789.4,273.0ZM843.7,303.5 846.9,304.1 850.0,303.8 849.9,306.1 847.8,308.3 846.0,308.3 844.6,306.1Z"/>
<path fill="#3a8a3a" d="M811.3,174.6 812.7,174.7 812.2,175.5 811.5,175.3Z"/>
<path fill="#276c27" d="M581.1,146.1 585.0,145.7 587.2,145.8 589.4,145.0 591.3,144.1 593.5,144.1 594.1,141.5 591.6,141.0 590.9,139.3 588.5,137.6 587.6,136.2 585.9,137.6 585.0,138.4 585.9,140.3 586.2,141.2 585.9,142.8 586.4,143.5 585.9,144.0 583.2,144.5Z"/>
<path fill="#276c27" d="M744.4,147.6 744.7,149.2 749.6,151.4 750.0,154.5 754.4,154.9 758.7,156.6 760.5,158.7 767.4,159.1 774.4,160.8 783.2,158.9 786.3,157.1 786.7,154.9 791.9,154.2 795.4,152.3 800.3,151.9 798.0,149.7 793.6,149.7 794.9,146.6 796.8,147.1 798.9,145.7 800.6,142.8 802.0,140.5 806.4,140.2 811.1,141.7 813.4,145.7 813.7,146.6 819.5,148.1 822.4,150.0 826.5,149.2 823.3,154.5 820.3,155.2 819.8,158.4 819.3,159.6 817.6,159.4 814.9,161.0 811.1,160.4 808.1,163.7 805.4,164.0 803.2,165.6 804.1,162.5 802.4,162.0 799.7,163.9 796.8,165.1 798.5,167.0 798.9,168.2 802.0,167.4 805.0,168.2 802.4,169.6 799.4,172.2 801.1,173.4 802.4,176.6 804.1,177.9 803.2,179.5 804.1,181.2 803.2,183.8 800.6,186.6 798.9,189.0 796.8,191.3 794.5,193.0 792.4,193.1 790.7,194.2 788.4,194.8 784.9,195.8 783.7,197.7 782.6,195.6 779.7,195.6 777.4,193.4 775.0,192.5 771.8,193.5 769.2,194.1 767.8,196.1 766.0,195.6 764.3,194.6 763.8,192.7 761.5,190.8 763.4,188.2 763.1,185.1 761.0,183.8 758.7,181.9 755.2,182.3 751.0,184.5 747.9,184.0 746.3,185.6 746.1,184.4 744.9,184.5 741.3,184.4 738.6,183.1 732.9,180.4 729.9,179.2 728.2,176.6 729.0,173.4 726.9,171.4 723.4,169.3 721.2,168.8 721.7,168.2 722.0,166.2 719.8,164.4 720.3,163.2 724.7,162.7 727.3,161.8 731.1,159.7 731.1,154.9 734.8,154.0 736.0,151.1 740.4,151.3 740.9,149.0 743.5,147.6ZM780.9,199.6 783.2,198.1 784.9,198.9 783.2,201.2 781.1,200.8Z"/>
<path fill="#1c571c" d="M373.4,149.0 376.3,148.0 424.9,148.0 425.6,147.3 432.2,149.5 436.8,149.2 443.0,151.8 445.3,153.5 447.1,154.4 447.2,158.4 446.0,160.1 453.2,158.7 453.0,157.7 457.5,156.8 460.5,154.9 466.3,154.9 468.4,152.8 470.3,150.7 472.7,151.3 472.7,153.7 474.1,155.2 471.5,156.1 468.9,157.1 467.7,158.9 468.9,160.4 466.3,161.1 464.0,161.5 461.9,162.5 461.5,164.1 459.3,164.6 460.2,166.2 458.4,168.8 458.9,171.4 456.7,173.1 453.2,174.8 451.2,175.9 449.7,177.4 449.0,180.0 449.3,182.2 450.5,184.0 451.4,186.6 450.7,189.2 449.3,189.2 448.3,187.5 446.5,184.7 446.7,182.6 444.4,180.9 441.8,181.4 438.3,180.4 435.2,180.4 435.0,182.5 432.2,182.1 429.8,181.7 427.3,181.4 425.2,182.3 423.3,183.6 421.4,185.1 421.4,187.8 418.1,187.1 417.4,185.2 415.6,183.0 413.9,181.2 411.6,182.1 410.7,182.6 408.6,181.4 407.8,179.7 405.2,177.8 402.2,177.8 402.2,178.6 397.3,178.6 390.7,176.6 386.6,176.6 386.3,175.3 384.4,174.0 380.5,173.1 379.1,171.5 378.3,169.5 377.2,167.4 374.9,164.8 373.9,162.9 374.2,160.1 373.7,158.7 374.6,155.8 374.6,152.6ZM344.9,112.2 344.9,128.4 347.5,128.9 351.0,130.8 354.5,129.2 358.0,131.7 361.0,134.8 364.1,136.0 364.1,137.6 361.5,137.6 358.9,135.8 356.3,133.2 352.8,131.8 350.2,130.6 346.7,129.4 343.2,128.9 339.7,128.9 336.2,127.5 332.7,127.5 330.1,129.2 326.6,130.3 325.7,128.0 329.2,126.8 327.0,127.0 324.8,127.5 322.2,130.1 321.9,132.0 319.7,132.8 317.9,134.1 314.4,135.8 312.1,136.2 310.0,137.2 306.5,138.1 303.4,138.4 306.0,137.7 308.2,136.2 311.7,135.0 315.2,133.1 316.1,131.1 313.5,131.5 310.9,131.3 308.2,131.1 308.2,129.2 306.1,128.7 303.9,128.4 302.1,126.3 303.4,124.6 306.5,123.3 310.0,122.8 310.0,121.1 306.5,121.1 304.5,121.4 302.4,120.7 300.4,120.9 297.8,119.2 301.3,118.1 304.8,117.6 308.6,118.1 305.3,116.4 303.0,116.1 301.3,114.5 301.3,113.5 303.9,112.6 306.5,111.9 310.0,111.0 312.6,110.3 315.2,110.2 317.9,109.3 320.2,109.0 322.2,110.2 324.9,109.9 327.5,110.9 330.1,111.1 332.7,111.0 335.2,111.9 337.9,111.6 340.2,112.1 342.6,112.2ZM318.7,197.9 320.5,198.6 319.4,200.0 318.5,198.9ZM314.9,195.5 315.8,196.0 315.2,196.1ZM317.5,196.5 318.7,196.8 318.0,197.2ZM321.3,133.2 325.2,132.4 324.8,133.7 322.2,134.4Z"/>
<path fill="#276c27" d="M603.3,140.0 606.1,137.7 607.7,137.7 610.3,139.3 613.1,140.0 615.9,139.5 616.6,141.9 617.3,144.5 612.4,145.7 615.2,148.5 613.8,150.6 608.6,150.7 604.4,150.4 605.4,148.0 602.3,147.1 601.8,145.0 601.6,143.1 603.7,140.5Z"/>
</g>
<path fill="none" stroke="#e89a1e" stroke-width="1.6" stroke-dasharray="1.3 1.2" d="M621.7,158.4L623.4,159.2M623.4,159.2L621.3,158.1M621.3,158.1L619.0,157.5M619.0,157.5L617.3,155.8M617.3,155.8L616.1,154.5M616.1,154.5L615.0,153.9M781.4,230.3L782.5,229.4M796.4,225.6L796.8,227.2M796.8,227.2L797.0,229.8M797.0,229.8L798.9,231.2M798.9,231.2L796.8,231.5M796.8,231.5L796.3,234.3M796.3,234.3L794.5,235.5M794.5,235.5L794.2,239.0M794.2,239.0L791.2,240.0M791.2,240.0L788.4,238.4M788.4,238.4L786.3,238.8M786.3,238.8L783.5,237.9M783.5,237.9L783.2,235.2M783.2,235.2L781.4,232.6M781.4,232.6L781.4,230.3M757.5,223.2L761.3,223.9M761.3,223.9L762.7,225.8M762.7,225.8L765.7,228.4M765.7,228.4L767.4,229.4M767.4,229.4L769.1,230.7M769.1,230.7L770.9,231.9M770.9,231.9L772.3,234.6M772.3,234.6L773.6,236.2M773.6,236.2L776.2,238.4M776.2,238.4L776.8,240.8M776.8,240.8L775.8,243.0M775.8,243.0L773.7,242.6M773.7,242.6L771.6,241.4M771.6,241.4L769.7,239.8M769.7,239.8L767.4,237.2M767.4,237.2L766.2,234.5M766.2,234.5L764.0,232.0M764.0,232.0L763.4,230.0M763.4,230.0L760.8,227.4M760.8,227.4L758.7,226.6M758.7,226.6L757.8,224.6M757.8,224.6L757.5,223.2M774.8,244.7L777.0,243.3M777.0,243.3L780.5,244.2M780.5,244.2L782.6,244.2M782.6,244.2L784.6,244.0M784.6,244.0L787.7,244.9M787.7,244.9L791.0,246.2M791.0,246.2L790.8,248.0M790.8,248.0L787.8,248.4M787.8,248.4L784.9,247.3M784.9,247.3L782.7,247.1M782.7,247.1L780.5,246.4M780.5,246.4L776.9,245.7M776.9,245.7L774.8,244.7M800.6,231.5L802.0,230.6M802.0,230.6L804.4,231.1M804.4,231.1L806.7,231.3M806.7,231.3L809.4,230.1M809.4,230.1L808.5,232.2M808.5,232.2L806.4,233.0M806.4,233.0L804.4,232.5M804.4,232.5L802.4,232.2M802.4,232.2L801.0,234.5M801.0,234.5L803.4,234.5M803.4,234.5L806.2,234.1M806.2,234.1L804.1,236.0M804.1,236.0L803.8,237.2M803.8,237.2L805.9,239.8M805.9,239.8L805.0,241.6M805.0,241.6L803.2,240.7M803.2,240.7L802.4,237.6M802.4,237.6L801.1,238.1M801.1,238.1L802.1,240.2M802.1,240.2L801.3,242.4M801.3,242.4L799.7,242.4M799.7,242.4L798.9,239.0M798.9,239.0L799.4,235.2M799.4,235.2L800.3,232.6M800.3,232.6L800.6,231.5M819.8,234.3L822.4,233.6M822.4,233.6L825.1,234.3M825.1,234.3L825.9,236.5M825.9,236.5L826.8,238.6M826.8,238.6L828.8,236.4M828.8,236.4L831.7,235.5M831.7,235.5L834.6,236.2M834.6,236.2L837.3,237.4M837.3,248.7L833.8,246.9M833.8,246.9L832.0,247.5M832.0,247.5L833.4,245.0M833.4,245.0L832.0,242.4M832.0,242.4L829.5,242.3M829.5,242.3L827.7,240.5M827.7,240.5L824.2,239.7M824.2,239.7L823.0,237.8M823.0,237.8L824.7,236.9M824.7,236.9L821.6,236.4M821.6,236.4L819.8,234.3M791.9,247.1L794.5,247.3M794.5,247.3L793.6,248.3M793.6,248.3L791.9,247.1M795.4,247.5L798.9,247.3M798.9,247.3L798.0,248.3M798.0,248.3L795.4,247.5M800.3,247.5L803.1,247.5M803.1,247.5L805.9,247.3M805.9,247.3L805.5,248.2M805.5,248.2L803.1,249.0M803.1,249.0L800.6,248.3M800.6,248.3L800.3,247.5M806.7,250.8L809.4,248.8M809.4,248.8L812.8,247.5M812.8,247.5L812.0,248.5M812.0,248.5L808.5,250.4M808.5,250.4L806.7,250.8M813.7,229.8L815.1,232.0M815.1,232.0L814.2,234.3M814.2,234.3L813.5,231.5M813.5,231.5L813.7,229.8M811.1,238.4L813.2,238.4M813.2,238.4L812.8,239.5M812.8,239.5L811.1,238.4M814.6,237.9L816.8,238.1M816.8,238.1L819.0,238.1M819.0,238.1L819.5,239.1M819.5,239.1L817.4,239.8M817.4,239.8L815.5,239.0M815.5,239.0L814.6,237.9M801.1,205.2L802.2,203.1M802.2,203.1L801.7,200.8M801.7,200.8L804.5,201.0M804.5,201.0L804.5,204.3M804.5,204.3L803.4,208.1M803.4,208.1L805.4,209.5M805.4,209.5L807.6,210.4M807.6,210.4L807.3,211.1M807.3,211.1L805.0,209.2M805.0,209.2L801.8,209.0M801.8,209.0L801.1,207.4M801.1,207.4L801.1,205.2M804.1,220.8L806.7,218.0M806.7,218.0L810.2,216.1M810.2,216.1L810.3,218.3M810.3,218.3L812.0,219.9M812.0,219.9L810.2,223.0M810.2,223.0L807.6,221.6M807.6,221.6L804.1,220.8M804.1,213.0L807.6,213.8M807.6,213.8L810.2,213.5M810.2,213.5L809.4,215.6M809.4,215.6L806.7,216.4M806.7,216.4L805.0,215.6M805.0,215.6L804.1,213.0M795.9,218.5L798.4,217.2M798.4,217.2L799.7,214.7M799.7,214.7L799.7,213.3M799.7,213.3L798.0,216.4M798.0,216.4L795.9,218.5M808.1,211.2L810.2,211.2M810.2,211.2L809.9,213.3M809.9,213.3L808.1,211.2M605.2,136.7L605.4,134.1M605.4,134.1L607.5,133.9M607.5,133.9L609.4,132.9M609.4,132.9L609.4,135.3M609.4,135.3L608.6,137.2M608.6,137.2L607.7,137.7M606.1,137.7L605.2,136.7M610.3,136.3L612.9,135.8M612.9,135.8L612.9,137.6M612.9,137.6L610.7,137.6M610.7,137.6L610.3,136.3M819.7,174.0L822.4,171.4M822.4,171.4L825.1,171.3M825.1,171.3L827.7,171.2M827.7,171.2L830.0,168.4M830.0,168.4L832.9,168.1M832.9,168.1L835.2,165.3M835.2,165.3L835.5,162.3M835.5,162.3L837.8,161.1M837.8,161.1L839.0,164.4M839.0,164.4L837.3,166.7M837.3,166.7L837.1,170.5M837.1,170.5L835.2,172.2M835.2,172.2L832.9,172.7M832.9,172.7L830.0,173.3M830.0,173.3L828.2,174.8M828.2,174.8L826.8,172.9M826.8,172.9L823.3,173.4M823.3,173.4L819.8,174.3M819.8,174.3L819.7,174.0M835.9,161.0L836.1,157.8M836.1,157.8L837.3,156.0M837.3,156.0L838.5,154.2M838.5,154.2L841.7,156.3M841.7,156.3L845.1,157.8M845.1,157.8L843.6,159.6M843.6,159.6L841.3,160.1M841.3,160.1L839.5,158.9M839.5,158.9L837.3,159.2M837.3,159.2L835.9,161.0M817.6,175.2L819.8,174.1M819.8,174.1L821.6,175.7M821.6,175.7L820.5,178.5M820.5,178.5L818.4,178.8M818.4,178.8L818.4,176.2M818.4,176.2L817.6,175.2M822.4,174.1L826.1,173.6M826.1,173.6L825.4,175.2M825.4,175.2L823.3,176.0M823.3,176.0L822.4,174.1"/>
<path fill="none" stroke="#e89a1e" stroke-width="1.8" stroke-dasharray="1.3 1.2" d="M548.3,119.4L550.5,118.5M550.5,118.5L552.7,117.8M552.7,117.8L555.0,117.3M555.0,117.3L557.3,118.1M557.3,118.1L559.7,118.1M559.7,118.1L562.3,118.8M562.3,118.8L564.9,118.0M564.9,118.0L567.4,120.2M567.4,120.2L564.9,121.4M564.9,121.4L562.7,121.2M562.7,121.2L560.8,122.5M560.8,122.5L558.8,123.0M558.8,123.0L556.7,122.0M556.7,122.0L554.4,122.3M554.4,122.3L551.5,122.3M551.5,122.3L552.7,120.6M552.7,120.6L549.2,120.4M549.2,120.4L548.3,119.4M573.6,143.5L575.9,143.5M575.9,143.5L578.1,142.9M578.1,142.9L580.3,142.4M576.6,137.2L573.6,138.9M573.6,138.9L573.6,140.5M573.6,140.5L574.5,141.9M574.5,141.9L573.6,143.5M636.5,162.2L633.0,162.5M633.0,162.5L631.3,163.2M631.3,163.2L630.7,164.8M630.7,164.8L633.0,167.0M633.0,167.0L631.3,167.9M631.3,167.9L631.3,169.6M631.3,169.6L629.5,169.6M629.5,169.6L628.3,167.9M628.3,167.9L627.8,166.5M627.8,166.5L626.0,164.1M632.1,171.4L634.6,171.7M634.6,171.7L637.0,171.9M637.0,171.9L633.9,172.4M633.9,172.4L632.1,171.4M645.2,111.6L648.7,112.4M648.7,112.4L651.3,113.5M651.3,113.5L654.0,112.9M654.0,112.9L656.0,114.2M656.0,114.2L658.4,114.3M658.4,114.3L660.6,115.0M660.6,115.0L662.7,115.9M662.7,115.9L661.8,118.0M661.8,118.0L659.2,118.1M659.2,118.1L656.6,118.1M656.6,118.1L654.0,118.1M660.9,118.5L663.2,117.3M663.2,117.3L665.6,117.5M665.6,117.5L667.9,117.6M667.9,117.6L667.9,114.2M667.9,114.2L671.4,115.0M671.4,115.0L672.3,116.9M672.3,116.9L674.9,115.5M674.9,115.5L677.0,114.6M677.0,114.6L679.2,114.2M679.2,114.2L681.5,114.7M681.5,114.7L683.6,114.2M683.6,114.2L687.1,114.2M687.1,114.2L689.4,113.5M689.4,113.5L691.9,114.1M691.9,114.1L694.1,113.3M694.1,113.3L696.7,111.9M696.7,111.9L698.8,112.0M698.8,112.0L700.9,111.8M700.9,111.8L702.8,112.8M702.8,112.8L705.5,113.0M705.5,113.0L708.1,113.6M708.1,113.6L710.7,114.7M710.7,114.7L708.1,112.4M708.1,112.4L707.7,109.8M707.7,109.8L709.1,107.4M709.1,107.4L711.6,106.4M711.6,106.4L713.6,106.5M713.6,106.5L715.7,106.4M715.7,106.4L717.7,107.2M717.7,107.2L717.3,109.8M717.3,109.8L717.2,112.0M717.2,112.0L718.6,113.6M718.6,113.6L720.3,113.6M720.3,113.6L720.4,111.4M720.4,111.4L720.0,109.3M720.0,109.3L722.0,107.0M722.0,107.0L724.6,108.1M724.6,108.1L727.3,107.9M727.3,107.9L729.4,106.9M729.4,106.9L731.7,107.6M731.7,107.6L732.5,105.8M732.5,105.8L734.7,105.3M734.7,105.3L736.9,106.2M736.9,106.2L739.1,106.1M739.1,106.1L741.3,105.3M741.3,105.3L743.0,104.1M743.0,104.1L745.6,103.3M745.6,103.3L748.2,103.1M748.2,103.1L750.5,103.5M750.5,103.5L752.5,102.0M752.5,102.0L754.8,102.5M754.8,102.5L757.0,102.2M757.0,102.2L759.2,102.8M759.2,102.8L761.3,101.0M761.3,101.0L763.6,102.1M763.6,102.1L765.7,101.3M765.7,101.3L768.1,101.0M768.1,101.0L770.4,100.5M770.4,100.5L772.7,99.6M772.7,99.6L775.1,100.9M775.1,100.9L777.9,100.6M777.9,100.6L780.2,100.1M780.2,100.1L782.3,101.4M782.3,101.4L784.4,101.9M784.4,101.9L786.7,101.8M786.7,101.8L789.3,103.1M789.3,103.1L787.3,104.0M787.3,104.0L784.9,103.5M784.9,103.5L783.2,105.0M783.2,105.0L785.8,104.2M785.8,104.2L788.4,105.1M788.4,105.1L790.6,105.0M790.6,105.0L792.8,105.0M792.8,105.0L795.0,104.8M795.0,104.8L797.1,105.5M797.1,105.5L799.5,106.2M799.5,106.2L802.0,105.3M802.0,105.3L804.4,105.2M804.4,105.2L806.7,106.0M806.7,106.0L808.8,106.2M808.8,106.2L810.8,107.0M810.8,107.0L812.8,107.2M812.8,107.2L816.3,106.7M816.3,106.7L818.1,109.8M818.1,109.8L820.8,110.2M820.8,110.2L823.3,109.0M823.3,109.0L825.7,108.5M825.7,108.5L828.0,109.8M828.0,109.8L830.3,109.1M830.3,109.1L833.1,108.6M833.1,108.6L835.5,107.2M835.5,107.2L837.6,107.5M837.6,107.5L839.7,106.9M839.7,106.9L841.8,107.2M841.8,107.2L843.9,107.1M843.9,107.1L846.0,107.6M846.0,107.6L848.2,108.6M848.2,108.6L850.7,108.1M850.7,108.1L853.0,109.0M853.0,109.0L855.6,109.4M855.6,109.4L858.2,110.0M858.2,110.0L860.5,109.1M860.5,109.1L862.9,109.6M862.9,109.6L865.2,109.8M865.2,109.8L867.8,111.1M867.8,111.1L870.5,112.1M870.5,112.1L874.0,112.2M874.0,112.2L876.5,113.2M876.5,113.2L879.2,112.4M879.2,112.4L881.8,112.1M881.8,112.1L884.4,111.6M884.4,111.6L886.5,112.8M886.5,112.8L888.8,113.3M888.8,113.3L889.7,111.6M889.7,111.6L891.9,111.1M891.9,111.1L894.0,111.6M894.0,111.6L896.3,111.3M896.3,111.3L898.4,112.1M898.4,112.1L900.7,112.6M900.7,112.6L902.9,113.6M902.9,113.6L905.4,113.3M681.0,109.0L683.6,110.2M683.6,110.2L685.9,111.1M685.9,111.1L688.3,110.9M688.3,110.9L690.6,110.5M690.6,110.5L688.9,107.2M688.9,107.2L690.5,105.8M690.5,105.8L692.4,104.6M692.4,104.6L694.5,103.8M694.5,103.8L696.7,103.2M696.7,103.2L698.9,102.7M698.9,102.7L701.1,102.0M701.1,102.0L703.4,101.0M703.4,101.0L706.0,101.5M706.0,101.5L708.1,99.5M708.1,99.5L710.7,99.8M710.7,99.8L708.5,100.0M708.5,100.0L706.3,99.4M706.3,99.4L704.3,100.3M704.3,100.3L702.2,100.6M702.2,100.6L700.0,100.1M700.0,100.1L698.0,100.9M698.0,100.9L695.9,100.8M695.9,100.8L693.7,101.0M693.7,101.0L692.0,102.4M692.0,102.4L690.2,103.7M690.2,103.7L688.0,103.8M688.0,103.8L686.4,105.1M686.4,105.1L685.0,106.8M685.0,106.8L682.8,107.2M682.8,107.2L681.0,109.0M757.0,95.6L759.1,97.1M759.1,97.1L761.5,97.5M761.5,97.5L764.0,97.7M764.0,97.7L766.0,97.4M766.0,97.4L768.1,97.3M768.1,97.3L770.2,97.3M770.2,97.3L772.3,97.3M772.3,97.3L774.4,97.2M774.4,97.2L772.7,95.3M772.7,95.3L770.5,95.5M770.5,95.5L768.6,94.1M768.6,94.1L766.3,95.3M766.3,95.3L764.3,94.5M764.3,94.5L762.2,93.9M762.2,93.9L759.8,95.3M759.8,95.3L757.0,95.6M830.3,102.0L832.3,103.0M832.3,103.0L834.5,102.9M834.5,102.9L836.6,102.4M836.6,102.4L838.7,102.5M838.7,102.5L840.8,102.9M840.8,102.9L843.4,102.4M843.4,102.4L846.0,102.0M846.0,102.0L848.3,102.3M848.3,102.3L850.7,102.1M850.7,102.1L853.0,102.9M853.0,102.9L851.0,102.0M851.0,102.0L848.7,103.1M848.7,103.1L846.7,102.2M846.7,102.2L844.5,102.1M844.5,102.1L842.5,101.2M842.5,101.2L840.5,101.9M840.5,101.9L838.4,101.3M838.4,101.3L836.4,101.9M836.4,101.9L834.3,101.2M834.3,101.2L832.3,102.0M832.3,102.0L830.3,102.0M902.8,109.5L905.4,109.0M905.4,110.0L902.8,109.5M675.8,112.8L678.4,113.3M678.4,113.3L676.7,113.8M676.7,113.8L675.8,112.8M893.2,307.4L892.6,308.8M892.6,308.8L890.0,310.0M890.0,310.0L889.1,312.5M889.1,312.5L886.2,313.7M886.2,313.7L883.6,313.0M883.6,313.0L881.8,312.3M881.8,312.3L884.4,309.5M884.4,309.5L886.4,308.1M886.4,308.1L888.8,307.4"/>
<path fill="none" stroke="#e89a1e" stroke-width="2.2" stroke-dasharray="1.3 1.2" d="M474.1,328.8L470.6,329.1M470.6,329.1L468.4,327.9M468.4,327.9L466.3,326.5M466.3,326.5L462.8,324.8M462.8,324.8L461.5,322.6M461.5,322.6L460.2,320.4M460.2,320.4L460.2,318.2M460.2,318.2L459.3,316.1M459.3,316.1L459.3,313.5M459.3,313.5L460.5,310.9M460.5,310.9L462.8,309.2M462.8,309.2L461.9,306.6M461.9,306.6L461.9,304.4M461.9,304.4L462.4,302.2M587.6,136.2L585.9,135.8M585.9,135.8L587.6,134.4M587.6,134.4L588.0,133.1M588.0,133.1L584.1,132.9M584.1,132.9L585.9,131.3M585.9,131.3L582.4,131.3M582.4,131.3L580.6,133.2M580.6,133.2L581.5,135.8M581.5,135.8L582.7,137.6M582.7,137.6L585.9,137.6M578.4,133.7L580.3,131.7M580.3,131.7L579.2,132.5M579.2,132.5L578.4,133.7M588.5,128.0L589.4,128.5M589.4,128.5L588.7,129.1M588.7,129.1L588.5,128.0"/>
<path fill="none" stroke="#e89a1e" stroke-width="2.4" stroke-dasharray="1.3 1.2" d="M364.1,137.6L361.5,137.6M361.5,137.6L358.9,135.8M358.9,135.8L356.3,133.2M356.3,133.2L352.8,131.8M352.8,131.8L350.2,130.6M350.2,130.6L346.7,129.4M346.7,129.4L343.2,128.9M343.2,128.9L339.7,128.9M339.7,128.9L336.2,127.5M336.2,127.5L332.7,127.5M332.7,127.5L330.1,129.2M330.1,129.2L326.6,130.3M326.6,130.3L325.7,128.0M325.7,128.0L329.2,126.8M329.2,126.8L327.0,127.0M327.0,127.0L324.8,127.5M324.8,127.5L322.2,130.1M322.2,130.1L321.9,132.0M321.9,132.0L319.7,132.8M319.7,132.8L317.9,134.1M317.9,134.1L314.4,135.8M314.4,135.8L312.1,136.2M312.1,136.2L310.0,137.2M310.0,137.2L306.5,138.1M306.5,138.1L303.4,138.4M303.4,138.4L306.0,137.7M306.0,137.7L308.2,136.2M308.2,136.2L311.7,135.0M311.7,135.0L315.2,133.1M315.2,133.1L316.1,131.1M316.1,131.1L313.5,131.5M313.5,131.5L310.9,131.3M310.9,131.3L308.2,131.1M308.2,131.1L308.2,129.2M308.2,129.2L306.1,128.7M306.1,128.7L303.9,128.4M303.9,128.4L302.1,126.3M321.3,133.2L325.2,132.4M325.2,132.4L324.8,133.7M324.8,133.7L322.2,134.4M322.2,134.4L321.3,133.2"/>
<path fill="none" stroke="#e89a1e" stroke-width="2.6" stroke-dasharray="1.3 1.2" d="M599.8,131.5L601.1,128.9M601.1,128.9L599.8,126.3M599.8,126.3L601.5,125.0M601.5,125.0L603.3,124.0M603.3,124.0L606.4,124.0M606.4,124.0L608.6,122.0M608.6,122.0L611.2,120.8M611.2,120.8L612.9,118.5M612.9,118.5L615.2,116.6M615.2,116.6L617.3,114.5M617.3,114.5L620.3,114.0M620.3,114.0L622.5,111.9M622.5,111.9L625.0,112.6M625.0,112.6L627.2,111.0M627.2,111.0L629.5,110.7M629.5,110.7L631.7,109.5M631.7,109.5L634.0,109.1M634.0,109.1L636.5,109.8M636.5,109.8L639.0,111.1M639.0,111.1L641.7,110.2M641.7,110.2L645.2,111.6M611.2,130.6L609.4,130.3M609.4,130.3L605.9,132.0M605.9,132.0L603.3,132.4M603.3,132.4L599.8,131.5M344.9,112.2L348.4,112.4M348.4,112.4L351.1,112.7M351.1,112.7L353.6,113.5M353.6,113.5L357.1,112.4M357.1,112.4L359.9,113.0M359.9,113.0L362.4,111.7M362.4,111.7L365.1,112.4M365.1,112.4L367.6,111.0M367.6,111.0L370.4,111.1M370.4,111.1L372.9,112.4M372.9,112.4L375.2,113.1M375.2,113.1L377.5,112.6M377.5,112.6L379.8,111.9M379.8,111.9L382.3,111.8M382.3,111.8L384.6,112.1M384.6,112.1L386.8,113.3M386.8,113.3L389.4,114.0M389.4,114.0L392.1,114.5M392.1,114.5L390.3,115.4M390.3,115.4L392.5,116.1M392.5,116.1L394.7,114.8M394.7,114.8L396.9,116.3M396.9,116.3L399.0,115.2M399.0,115.2L402.5,114.2M406.0,113.6L408.2,114.9M408.2,114.9L410.4,115.8M410.4,115.8L413.0,115.4M413.0,115.4L415.3,114.3M415.3,114.3L417.7,114.7M417.7,114.7L420.0,115.4M420.0,115.4L423.5,114.7M423.5,114.7L424.4,113.3M424.4,113.3L422.6,110.7M422.6,110.7L425.2,108.3M425.2,108.3L428.7,109.8M428.7,109.8L430.5,112.4M430.5,112.4L433.1,114.2M433.1,114.2L435.2,114.8M435.2,114.8L437.5,115.0M437.5,115.0L437.5,112.9M437.5,112.9L439.5,112.1M439.5,112.1L441.8,111.9M441.8,111.9L444.4,112.4M444.4,112.4L446.5,113.4M446.5,113.4L448.8,112.9M448.8,112.9L447.9,115.0M447.9,115.0L449.2,116.8M449.2,116.8L447.4,118.0M447.4,118.0L445.3,118.0M445.3,118.0L443.0,117.4M443.0,117.4L440.9,118.5M454.9,124.9L457.5,124.6M457.5,124.6L460.2,125.1M475.9,131.0L478.3,128.4M478.3,128.4L479.5,131.0M479.5,131.0L482.0,132.4M482.0,132.4L483.7,133.7M483.7,133.7L484.6,135.8M484.6,135.8L488.1,137.6M488.1,137.6L490.7,139.3M490.7,139.3L493.7,141.9M493.7,141.9L491.6,143.8M491.6,143.8L488.1,145.7M488.1,145.7L485.9,145.2M485.9,145.2L483.7,146.1M483.7,146.1L481.5,146.3M481.5,146.3L479.4,145.7M479.4,145.7L477.2,146.8M477.2,146.8L475.0,145.9M474.1,148.0L476.3,147.2M476.3,147.2L478.5,148.0M478.5,148.0L478.8,149.2M478.8,149.2L475.9,149.7M475.9,149.7L477.6,151.4M477.6,151.4L478.5,152.8M478.5,152.8L481.1,153.5M481.1,153.5L483.7,153.7M483.7,153.7L486.3,151.8M486.3,151.8L486.3,153.5M486.3,153.5L483.7,154.5M483.7,154.5L480.2,155.8M480.2,155.8L476.7,157.5M476.7,157.5L475.5,156.3M475.5,156.3L478.5,154.4M478.5,154.4L475.9,154.5M475.9,154.5L474.1,155.2M376.3,148.0L376.0,147.4M376.0,147.4L372.9,145.7M372.9,145.7L370.8,144.5M370.8,144.5L368.5,144.5M368.5,144.5L368.0,142.2M368.0,142.2L365.9,140.2M365.9,140.2L363.6,138.8M363.6,138.8L364.1,136.0M483.7,117.3L481.7,119.0M481.7,119.0L479.4,120.2M479.4,120.2L477.6,123.7M477.6,123.7L474.8,123.2M474.8,123.2L472.4,124.6M472.4,124.6L469.9,123.1M469.9,123.1L467.1,123.7M467.1,123.7L464.2,123.0M464.2,123.0L461.9,121.1M461.9,121.1L459.6,120.1M459.6,120.1L457.3,120.2M457.3,120.2L454.9,120.6M454.9,120.6L456.7,118.5M456.7,118.5L458.6,117.6M458.6,117.6L460.6,117.1M460.6,117.1L462.8,117.6M462.8,117.6L463.6,115.0M463.6,115.0L461.3,114.6M461.3,114.6L459.1,113.7M459.1,113.7L456.7,114.2M456.7,114.2L454.1,113.8M454.1,113.8L452.4,111.4M452.4,111.4L449.7,111.6M449.7,111.6L447.3,110.8M447.3,110.8L445.0,110.5M445.0,110.5L442.7,111.6M442.7,111.6L440.1,112.1M440.1,112.1L437.9,111.0M437.9,111.0L435.7,109.8M435.7,109.8L435.7,106.4M435.7,106.4L438.1,106.2M438.1,106.2L440.3,105.2M440.3,105.2L442.7,105.1M442.7,105.1L444.9,105.9M444.9,105.9L447.1,104.5M447.1,104.5L449.2,106.0M449.2,106.0L451.4,105.1M451.4,105.1L454.0,106.1M454.0,106.1L456.7,106.7M456.7,106.7L458.8,107.5M458.8,107.5L460.9,108.4M460.9,108.4L463.0,109.0M463.0,109.0L465.4,108.8M465.4,108.8L467.5,110.2M467.5,110.2L470.3,109.3M470.3,109.3L472.4,111.0M472.4,111.0L474.1,113.3M474.1,113.3L476.3,115.5M476.3,115.5L479.4,115.9M479.4,115.9L481.8,115.9M481.8,115.9L483.7,117.3M407.8,113.3L409.8,112.7M409.8,112.7L412.0,113.5M412.0,113.5L413.9,112.2M413.9,112.2L412.1,110.5M412.1,110.5L409.5,110.7M409.5,110.7L408.6,108.1M408.6,108.1L406.4,108.0M406.4,108.0L404.8,105.9M404.8,105.9L402.5,106.0M402.5,106.0L399.8,106.1M399.8,106.1L397.3,107.2M397.3,107.2L394.9,107.3M394.9,107.3L392.5,107.1M392.5,107.1L390.3,105.8M385.1,107.2L386.8,110.7M386.8,110.7L388.5,111.8M388.5,111.8L390.3,112.8M390.3,112.8L393.8,114.2M393.8,114.2L396.2,114.8M396.2,114.8L398.4,113.4M398.4,113.4L400.8,113.8M372.9,108.3L376.3,109.5M376.3,109.5L378.9,109.0M378.9,109.0L381.6,109.0M381.6,109.0L384.2,109.0M384.2,109.0L386.6,108.2M386.6,108.2L388.6,106.4M388.6,106.4L385.9,104.3M385.9,104.3L383.9,104.7M383.9,104.7L381.9,103.1M381.9,103.1L379.8,103.8M379.8,103.8L377.2,103.4M377.2,103.4L374.6,104.1M374.6,104.1L373.7,106.0M373.7,106.0L372.0,107.2M372.0,107.2L372.9,108.3M454.9,100.6L452.7,100.8M452.7,100.8L450.6,99.6M450.6,99.6L448.4,99.5M448.4,99.5L446.2,100.5M446.2,100.5L444.1,101.1M444.1,101.1L442.0,99.6M442.0,99.6L439.9,99.8M439.9,99.8L437.8,100.9M437.8,100.9L435.7,100.3M435.7,100.3L438.0,98.3M438.0,98.3L440.9,97.7M440.9,97.7L437.5,96.0M437.5,96.0L440.1,94.9M440.1,94.9L442.7,93.7M432.2,92.1L434.5,92.4M434.5,92.4L436.5,90.8M436.5,90.8L439.0,91.9M439.0,91.9L440.9,90.4M440.9,90.4L443.0,90.9M443.0,90.9L445.0,91.0M445.0,91.0L446.8,88.6M446.8,88.6L448.9,88.9M448.9,88.9L450.9,89.5M450.9,89.5L452.9,88.7M452.9,88.7L454.9,88.8M454.9,88.8L457.2,89.6M457.2,89.6L459.6,88.2M459.6,88.2L461.9,89.7M461.9,89.7L464.2,89.0M464.2,89.0L466.6,89.2M466.6,89.2L468.9,88.8M468.9,88.8L470.8,89.6M470.8,89.6L472.8,89.9M472.8,89.9L474.8,90.0M474.8,90.0L476.9,88.5M476.9,88.5L478.8,90.7M478.8,90.7L480.9,89.0M480.9,89.0L482.8,89.9M482.8,89.9L479.4,91.6M479.4,91.6L477.2,92.7M477.2,92.7L474.9,93.5M474.9,93.5L472.4,93.0M472.4,93.0L470.2,94.1M470.2,94.1L468.0,95.4M468.0,95.4L465.4,95.1M465.4,95.1L462.6,94.6M462.6,94.6L460.2,96.0M460.2,96.0L458.4,98.0M458.4,98.0L457.0,99.8M457.0,99.8L454.9,100.6M451.4,103.6L449.3,103.8M449.3,103.8L447.2,102.6M447.2,102.6L445.0,102.5M445.0,102.5L442.9,104.2M442.9,104.2L440.8,102.7M440.8,102.7L438.6,102.9M438.6,102.9L436.5,104.0M436.5,104.0L434.3,104.2M434.3,104.2L432.2,103.4M432.2,103.4L430.5,100.8M430.5,100.8L433.1,100.9M433.1,100.9L435.7,100.8M435.7,100.8L437.7,101.7M437.7,101.7L439.8,100.5M439.8,100.5L441.8,102.3M441.8,102.3L443.8,102.0M443.8,102.0L445.8,102.4M445.8,102.4L447.9,101.5M447.9,101.5L451.4,102.4M451.4,102.4L451.4,103.6M439.2,97.3L437.1,97.5M437.1,97.5L435.1,96.2M435.1,96.2L433.0,96.0M433.0,96.0L430.8,97.6M430.8,97.6L428.7,96.8M428.7,96.8L426.5,94.8M426.5,94.8L423.5,94.2M423.5,94.2L426.0,94.0M426.0,94.0L428.0,92.3M428.0,92.3L430.5,92.1M439.2,93.5L439.2,97.3M418.2,104.8L420.9,105.3M420.9,105.3L423.5,106.4M423.5,106.4L420.4,106.8M420.4,106.8L418.2,109.0M418.2,109.0L416.0,106.9M416.0,106.9L413.0,106.7M413.0,106.7L415.4,105.1M415.4,105.1L418.2,104.8M434.0,106.9L431.6,107.1M431.6,107.1L429.2,105.8M429.2,105.8L426.8,105.7M426.8,105.7L424.4,106.7M424.4,106.7L424.4,104.6M424.4,104.6L426.5,104.0M426.5,104.0L428.7,105.5M428.7,105.5L430.9,105.2M430.9,105.2L433.1,104.6M433.1,104.6L434.0,106.9M406.0,102.9L403.7,103.4M403.7,103.4L401.3,102.5M401.3,102.5L399.0,103.8M399.0,103.8L397.0,102.5M397.0,102.5L394.8,104.1M394.8,104.1L392.8,102.4M392.8,102.4L390.7,102.5M390.7,102.5L388.6,102.9M388.6,102.9L386.8,100.8M386.8,100.8L388.8,100.1M388.8,100.1L390.9,99.9M390.9,99.9L392.9,100.6M392.9,100.6L395.0,101.2M395.0,101.2L397.0,99.9M397.0,99.9L399.0,100.3M399.0,100.3L401.2,101.7M401.2,101.7L403.6,101.6M403.6,101.6L406.0,101.2M406.0,101.2L406.0,102.9M420.9,102.9L418.6,103.1M418.6,103.1L416.4,101.8M416.4,101.8L414.1,101.6M414.1,101.6L411.8,103.3M411.8,103.3L409.5,102.5M409.5,102.5L409.5,100.3M409.5,100.3L411.6,101.1M411.6,101.1L413.7,100.8M413.7,100.8L415.8,99.6M415.8,99.6L417.9,99.4M417.9,99.4L420.0,100.1M420.0,100.1L420.9,102.9M388.6,100.3L386.5,100.6M386.5,100.6L384.3,99.6M384.3,99.6L382.2,99.6M382.2,99.6L380.2,101.4M380.2,101.4L378.1,100.8M378.1,100.8L381.0,100.4M381.0,100.4L383.3,98.6M383.3,98.6L385.8,99.9M385.8,99.9L388.6,100.3M416.5,97.7L414.3,97.7M414.3,97.7L412.2,96.3M412.2,96.3L410.1,96.0M410.1,96.0L407.8,96.8M407.8,96.8L411.3,95.4M411.3,95.4L413.7,95.1M413.7,95.1L415.8,96.8M415.8,96.8L418.2,96.3M418.2,96.3L416.5,97.7M487.6,150.4L490.5,150.8M490.5,150.8L493.3,151.8M493.3,151.8L495.7,152.8M495.7,152.8L498.2,151.9M498.2,151.9L499.1,150.4M499.1,150.4L497.7,148.8M497.7,148.8L497.2,147.1M497.2,147.1L495.6,145.5M495.6,145.5L493.3,145.9M493.3,145.9L494.2,143.5M494.2,143.5L491.1,145.0M491.1,145.0L490.4,147.2M490.4,147.2L488.0,148.1M488.0,148.1L487.6,150.4M375.6,149.0L372.0,148.1M372.0,148.1L369.4,146.8M369.4,146.8L367.1,145.0M367.1,145.0L370.2,145.4M370.2,145.4L372.0,147.3M372.0,147.3L374.6,147.4M374.6,147.4L375.6,149.0M360.6,141.0L358.9,139.1M358.9,139.1L361.0,139.3M361.0,139.3L362.0,141.9M362.0,141.9L360.6,141.0M478.7,146.6L480.8,146.7M480.8,146.7L482.8,147.3M482.8,147.3L483.2,147.8M483.2,147.8L480.2,147.4M480.2,147.4L478.7,146.6M478.8,151.8L480.9,151.9M480.9,151.9L482.8,152.5M482.8,152.5L482.0,153.2M482.0,153.2L479.4,152.6M479.4,152.6L478.8,151.8M417.4,113.3L419.4,113.2M419.4,113.2L421.4,114.5M421.4,114.5L423.5,113.6M423.5,113.6L424.4,112.2M424.4,112.2L422.3,111.0M422.3,111.0L420.0,111.9M420.0,111.9L417.4,113.3"/>
<path fill="none" stroke="#e89a1e" stroke-width="3.4" stroke-dasharray="1.3 1.2" d="M463.6,97.3L465.9,97.1M465.9,97.1L467.5,94.9M467.5,94.9L470.0,95.7M470.0,95.7L472.1,95.2M472.1,95.2L474.1,94.2M474.1,94.2L476.3,93.8M476.3,93.8L478.4,92.9M478.4,92.9L480.5,92.1M480.5,92.1L482.8,92.1M482.8,92.1L486.3,90.8M486.3,90.8L488.5,90.8M488.5,90.8L490.7,90.9M490.7,90.9L492.8,89.7M492.8,89.7L495.0,89.6M495.0,89.6L497.3,91.0M497.3,91.0L499.4,89.3M499.4,89.3L501.6,89.5M501.6,89.5L503.8,89.9M503.8,89.9L506.0,90.4M506.0,90.4L508.2,90.3M508.2,90.3L510.4,90.0M510.4,90.0L512.5,89.0M512.5,89.0L514.6,87.8M514.6,87.8L517.0,90.1M517.0,90.1L519.0,87.8M519.0,87.8L521.3,88.5M521.3,88.5L523.3,88.6M523.3,88.6L525.3,88.2M525.3,88.2L527.4,89.1M527.4,89.1L529.4,88.2M529.4,88.2L531.5,88.5M531.5,88.5L533.5,88.0M533.5,88.0L535.4,89.4M535.4,89.4L537.4,89.5M537.4,89.5L539.5,87.6M539.5,87.6L541.4,89.1M541.4,89.1L543.5,88.1M543.5,88.1L545.5,88.9M545.5,88.9L547.5,89.0M547.5,89.0L549.7,89.3M549.7,89.3L551.6,90.9M551.6,90.9L553.9,91.0M553.9,91.0L556.2,90.8M556.2,90.8L558.2,90.3M558.2,90.3L560.1,92.1M560.1,92.1L562.1,91.7M562.1,91.7L564.1,91.9M564.1,91.9L566.2,90.9M566.2,90.9L568.2,91.3M568.2,91.3L570.1,91.8M570.1,91.8L567.8,91.3M567.8,91.3L566.2,93.9M566.2,93.9L563.6,92.3M563.6,92.3L561.6,92.9M561.6,92.9L559.7,94.2M559.7,94.2L560.7,96.3M560.7,96.3L561.4,98.6M561.4,98.6L559.1,99.3M559.1,99.3L557.5,101.0M557.5,101.0L556.2,102.9M556.2,102.9L557.9,106.4M557.9,106.4L555.3,107.2M555.3,107.2L552.7,108.1M552.7,108.1L552.7,110.7M552.7,110.7L550.9,112.9M550.9,112.9L548.0,112.9M548.0,112.9L545.7,114.2M545.7,114.2L543.6,114.6M543.6,114.6L541.5,114.3M541.5,114.3L539.5,115.5M539.5,115.5L537.4,115.4M537.4,115.4L535.2,115.0M535.2,115.0L533.0,115.5M533.0,115.5L531.6,117.1M531.6,117.1L530.0,118.5M530.0,118.5L527.8,118.7M527.8,118.7L525.8,120.2M525.8,120.2L523.7,121.1M523.7,121.1L521.3,120.2M521.3,120.2L520.2,122.9M520.2,122.9L517.8,124.6M517.8,124.6L516.8,126.9M516.8,126.9L515.1,128.9M515.1,128.9L512.5,128.9M512.5,128.9L509.7,128.6M509.7,128.6L507.3,127.2M507.3,127.2L504.9,126.5M504.9,126.5L504.1,123.9M504.1,123.9L502.1,122.8M502.1,122.8L501.1,120.7M501.1,120.7L498.6,119.8M498.6,119.8L497.7,117.6M497.7,117.6L498.6,114.2M498.6,114.2L502.1,112.4M502.1,112.4L500.1,111.5M500.1,111.5L497.9,111.6M497.9,111.6L495.9,110.7M495.9,110.7L495.1,107.2M495.1,107.2L494.0,104.8M494.0,104.8L491.6,103.7M491.6,103.7L489.8,102.0M489.8,102.0L487.8,100.6M487.8,100.6L485.3,102.3M485.3,102.3L483.3,101.2M483.3,101.2L481.1,100.8M481.1,100.8L478.7,100.4M478.7,100.4L476.3,101.9M476.3,101.9L473.9,101.4M473.9,101.4L471.5,101.2M471.5,101.2L469.7,99.3M469.7,99.3L467.1,99.1M467.1,99.1L463.6,97.3"/>
<!--MAPEND-->
<g id="navctl">
<rect x="268" y="76" width="18" height="53.5" rx="9" fill="#004b00"/>
<rect x="259" y="93.5" width="36" height="18" rx="9" fill="#004b00"/>
<path d="M277,80.3 L282.3,88.3 L271.7,88.3Z M277,125.7 L282.3,117.6 L271.7,117.6Z M262.7,102.8 L272.4,97.8 L272.4,107.8Z M291,102.8 L281.8,97.8 L281.8,107.8Z" fill="#fff"/>
<rect x="268" y="134.7" width="18" height="54" rx="9" fill="#004b00"/>
<path d="M272,145.2 H282 M277,140.2 V150.2 M272,179 H282" stroke="#fff" stroke-width="2" fill="none"/>
<g fill="none" stroke="#9c9ce6" stroke-width="0.7">
<circle cx="277.2" cy="161.7" r="8" fill="#2a3f7a" fill-opacity="0.3"/>
<ellipse cx="277.2" cy="161.7" rx="4" ry="8"/>
<path d="M277.2,153.7 V169.7 M269.2,161.7 H285.2 M270.6,157.2 Q277.2,159.4 283.8,157.2 M270.6,166.2 Q277.2,164 283.8,166.2"/>
</g>
</g>
</svg>

<!-- LEGEND -->
<div class="abs" style="left:251px;top:398px;width:150px;height:20px;background:linear-gradient(90deg,#ffffff 0%,#f4f9f3 5%,#cfe3cc 17%,#a9cfa5 36%,#74b070 55%,#2f8f2f 78%,#0e720e 88%,#004a00 100%)"></div>
<div class="abs" style="left:251px;top:398px;font-size:12px;line-height:14px;color:#222">0</div>
<div class="abs" style="left:341px;top:398px;font-size:12px;line-height:14px;color:#222">71,183</div>

<!-- REPORT VIEW -->
<div class="abs hl" style="top:428px;width:715px"></div>
<div class="abs h" style="left:261px;top:439px">Report View by Selection</div>
<div class="abs h blue" style="left:864px;top:439px">Customize</div>
<div class="abs" style="left:241px;top:464px;width:710px;height:39px;background:#f5f5f5;border-top:1px solid #d9d9d9"></div>
<div class="abs th" style="left:255px;top:468px;text-align:left">Total:</div><div class="abs th" style="left:252px;top:484px;text-align:left">1212</div>
<div class="abs th" style="left:322px;top:476px;width:100px">Institutions</div>
<div class="abs th" style="left:441px;top:476px;width:140px">Countries/Regions</div>
<div class="abs th" style="left:583px;top:468px;width:120px">Web of Science</div><div class="abs th" style="left:578px;top:484px;width:120px">Documents</div>
<div class="abs th" style="left:733px;top:476px;text-align:left;color:#4a78a6">Cites</div>
<div class="abs" style="left:770px;top:482px;width:0;height:0;border-left:4px solid transparent;border-right:4px solid transparent;border-top:4px solid #5b8fc7"></div>
<div class="abs th" style="left:820px;top:476px;width:100px">Cites/Paper</div>

<!-- TABLE BODY -->
<div id="tbody" class="abs" style="left:0;top:0;width:963px;height:866px;pointer-events:none">
<!--ROWS-->
<div class="abs" style="left:241px;top:519px;width:693px;height:317px;overflow:hidden">
<div class="abs row odd" style="left:0;top:-16px;width:693px;height:34px"><div class="inst" style="top:3.0px"><br>MADRID</div></div>
<div class="abs row even" style="left:0;top:18px;width:693px;height:34px"><div class="n" style="top:7.0px">251</div><div class="inst" style="top:3.0px">ARIZONA STATE<br>UNIVERSITY</div><div class="ctry" style="top:9.5px">USA</div><div class="num c1" style="top:7.0px">1,867</div><div class="num c2" style="top:7.0px">47,861</div><div class="num c3" style="top:7.0px">25.64</div></div>
<div class="abs row odd" style="left:0;top:52px;width:693px;height:34px"><div class="n" style="top:7.0px">252</div><div class="inst" style="top:3.0px">UNIVERSITY OF<br>EDINBURGH</div><div class="ctry" style="top:9.5px">SCOTLAND</div><div class="num c1" style="top:7.0px">2,329</div><div class="num c2" style="top:7.0px">47,644</div><div class="num c3" style="top:7.0px">20.46</div></div>
<div class="abs row even" style="left:0;top:86px;width:693px;height:47px"><div class="n" style="top:13.5px">253</div><div class="inst" style="top:3.0px">DRESDEN<br>UNIVERSITY OF<br>TECHNOLOGY</div><div class="ctry" style="top:9.5px">GERMANY (FED<br>REP GER)</div><div class="num c1" style="top:13.5px">2,946</div><div class="num c2" style="top:13.5px">47,480</div><div class="num c3" style="top:13.5px">16.12</div></div>
<div class="abs row odd" style="left:0;top:133px;width:693px;height:34px"><div class="n" style="top:7.0px">254</div><div class="inst" style="top:3.0px">SHANGHAI<br>UNIVERSITY</div><div class="ctry" style="top:3.0px">CHINA<br>MAINLAND</div><div class="num c1" style="top:7.0px">3,314</div><div class="num c2" style="top:7.0px">47,471</div><div class="num c3" style="top:7.0px">14.32</div></div>
<div class="abs row even" style="left:0;top:167px;width:693px;height:34px"><div class="n" style="top:7.0px">255</div><div class="inst" style="top:3.0px">TONGJI<br>UNIVERSITY</div><div class="ctry" style="top:3.0px">CHINA<br>MAINLAND</div><div class="num c1" style="top:7.0px">3,324</div><div class="num c2" style="top:7.0px">47,201</div><div class="num c3" style="top:7.0px">14.20</div></div>
<div class="abs row odd" style="left:0;top:201px;width:693px;height:47px"><div class="n" style="top:13.5px">256</div><div class="inst" style="top:3.0px">CHARLES<br>UNIVERSITY<br>PRAGUE</div><div class="ctry" style="top:9.5px">CZECH<br>REPUBLIC</div><div class="num c1" style="top:13.5px">3,770</div><div class="num c2" style="top:13.5px">47,087</div><div class="num c3" style="top:13.5px">12.49</div></div>
<div class="abs row even" style="left:0;top:248px;width:693px;height:34px"><div class="n" style="top:7.0px">257</div><div class="inst" style="top:3.0px">UNIVERSITY OF<br>MILAN</div><div class="ctry" style="top:9.5px">ITALY</div><div class="num c1" style="top:7.0px">2,975</div><div class="num c2" style="top:7.0px">46,930</div><div class="num c3" style="top:7.0px">15.77</div></div>
<div class="abs row odd" style="left:0;top:282px;width:693px;height:34px"><div class="n" style="top:7.0px">258</div><div class="inst" style="top:3.0px">UNIVERSITY OF<br>REGENSBURG</div><div class="ctry" style="top:3.0px">GERMANY (FED<br>REP GER)</div><div class="num c1" style="top:7.0px">1,994</div><div class="num c2" style="top:7.0px">46,873</div><div class="num c3" style="top:7.0px">23.51</div></div>
<div class="abs" style="left:0;top:316px;width:693px;height:1px;background:#e6e6e6"></div>
</div>
<div class="abs" style="left:676px;top:519px;width:2px;height:1px;background:#b5b5c0"></div><div class="abs" style="left:784px;top:519px;width:2px;height:1px;background:#b5b5c0"></div>
<div class="abs" style="left:934px;top:519px;width:17px;height:317px;background:#f1f1f1"></div>
<div class="abs" style="left:936px;top:591px;width:13px;height:17px;background:#c1c1c1"></div>
<div class="abs" style="left:938px;top:525px;width:0;height:0;border-left:4px solid transparent;border-right:4px solid transparent;border-bottom:5px solid #505050"></div>
<div class="abs" style="left:938px;top:826px;width:0;height:0;border-left:4px solid transparent;border-right:4px solid transparent;border-top:5px solid #505050"></div>
<div class="abs" style="left:241px;top:839px;width:693px;height:17px;background:#f1f1f1"></div>
<div class="abs" style="left:258px;top:841px;width:542px;height:13px;background:#c1c1c1"></div>
<div class="abs" style="left:246px;top:843px;width:0;height:0;border-top:4px solid transparent;border-bottom:4px solid transparent;border-right:5px solid #a3a3a3"></div>
<div class="abs" style="left:923px;top:843px;width:0;height:0;border-top:4px solid transparent;border-bottom:4px solid transparent;border-left:5px solid #505050"></div>
<div class="abs" style="left:231px;top:679px;width:719px;height:45px;border:3px solid #ff1c0d;border-radius:5px"></div>
</div>

<div id="rstrip" class="abs"></div>
<div class="abs" style="left:0;top:864px;width:956px;height:1px;background:#fbfbfb"></div>
<div id="bstrip" class="abs"></div>
</body>
</html>
